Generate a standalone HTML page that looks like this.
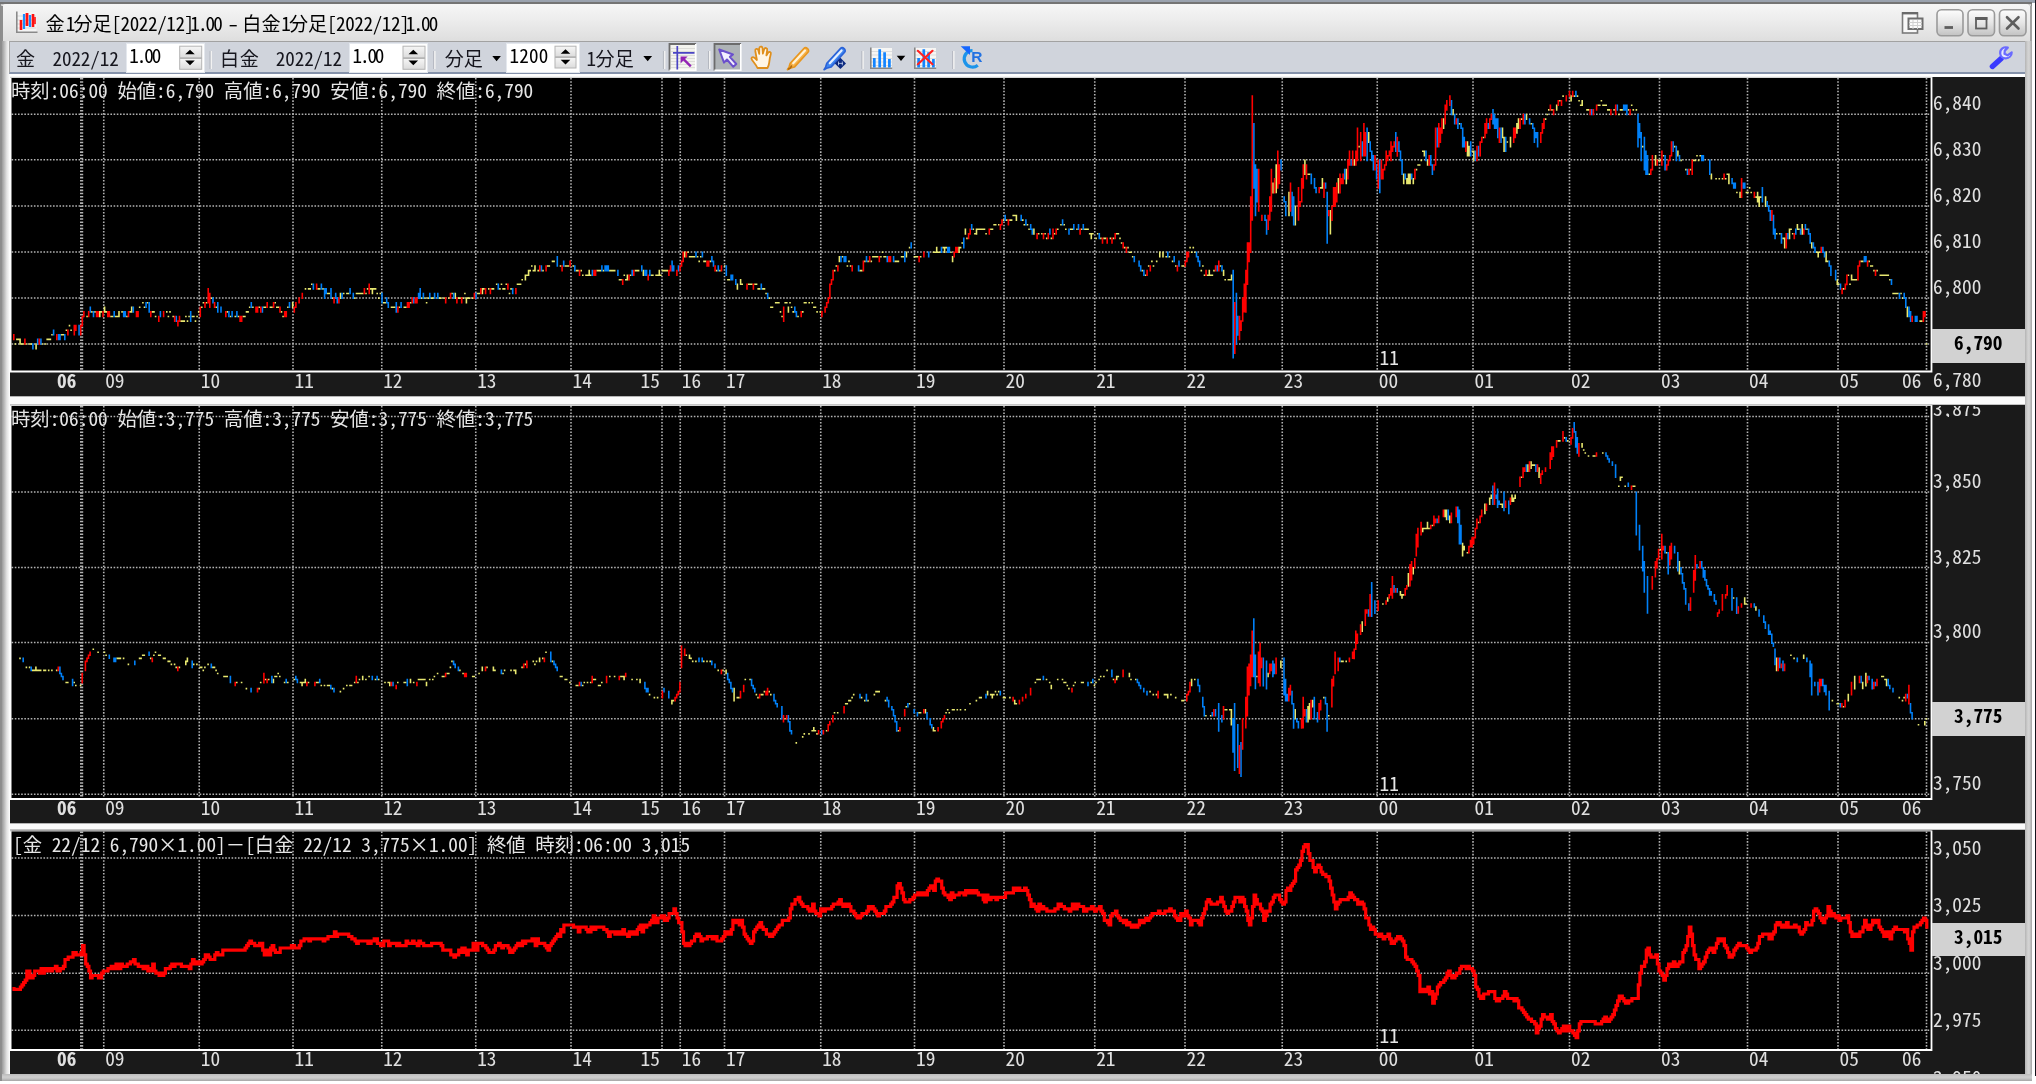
<!DOCTYPE html>
<html lang="ja"><head><meta charset="utf-8"><title>chart</title>
<style>
html,body{margin:0;padding:0}
body{width:2036px;height:1084px;position:relative;overflow:hidden;background:#fff;font-family:"Liberation Sans","IPAGothic",sans-serif}
.abs{position:absolute}
.gl{left:0;top:0;width:2036px;height:1084px;will-change:transform}
.mono{font-family:"Noto Sans CJK JP","IPAGothic","Liberation Mono",monospace;font-feature-settings:"hwid";font-size:19.35px;line-height:20px;white-space:pre;color:#e6e6e6}
.ui{font-family:"Noto Sans CJK JP","IPAGothic","Liberation Sans",sans-serif;font-feature-settings:"hwid";font-size:19.1px;line-height:22px;white-space:pre;color:#16161e}
.tt{top:12px;color:#000}
.spin{height:28.3px;background:#fff;box-shadow:0 0 0 1px #e4e8ee}
.yl{position:absolute;left:1933px;color:#e0e0e0}
.xl{position:absolute;color:#e0e0e0}
.box{position:absolute;left:1931.5px;width:93.5px;background:#d2d2d2;color:#000;font-weight:bold;text-align:center}
svg{position:absolute;left:0;top:0}
</style></head><body>

<div class="abs" style="left:0;top:0;width:2036px;height:3px;background:#9aa2ae"></div>
<div class="abs" style="left:2034.5px;top:0;width:2px;height:1076px;background:#14141c"></div>
<div class="abs" id="win" style="left:0;top:2.5px;width:2031.5px;height:1078px;background:#c8c8c8;box-shadow:inset 0 0 0 1px #8c8c8c"></div>
<div class="abs" style="left:1px;top:4px;width:2030px;height:37px;background:linear-gradient(#f6f6f6,#ececec 45%,#dedede);border-radius:5px 5px 0 0"></div>
<div class="abs" style="left:0;top:2.4px;width:2032px;height:1.8px;background:#747474"></div>
<div class="abs" style="left:2030px;top:6px;width:1.6px;height:1074px;background:#a2a2a2"></div>
<div class="abs" style="left:0.8px;top:6px;width:1.8px;height:1074px;background:#8e8e8e"></div>
<div class="abs" style="left:1.5px;top:41px;width:8px;height:1038px;background:linear-gradient(90deg,#9a9a9a,#bdbdbd 30%,#e2e2e2 60%,#f4f4f4 85%,#fff)"></div>
<div class="abs" style="left:2025px;top:41px;width:6.5px;height:1039px;background:linear-gradient(90deg,#b4b4b4,#d4d4d4 45%,#cfcfcf 65%,#a4a4a4)"></div>
<div class="abs" style="left:1.5px;top:1074px;width:2030px;height:6.5px;background:linear-gradient(#bcbcbc,#cfcfcf 45%,#c4c4c4 65%,#a6a6a6)"></div>
<div class="abs" id="tb" style="left:8.5px;top:40.5px;width:2016.5px;height:33px;background:#d0d4dc;border-top:1.5px solid #a2a2a2;border-left:1.5px solid #a8a8a8;box-sizing:border-box;border-bottom:2px solid #8592aa"></div>
<div class="abs" style="left:9.5px;top:73.5px;width:2015.5px;height:3.5px;background:#fff"></div>
<div class="abs" style="left:10px;top:77px;width:2015px;height:997px;background:#1a1a1a"></div>
<div class="abs" style="left:10.0px;top:77.0px;width:1921.5px;height:294.5px;background:#000"></div>
<div class="abs" style="left:10.0px;top:405.0px;width:1921.5px;height:394.0px;background:#000"></div>
<div class="abs" style="left:10.0px;top:830.5px;width:1921.5px;height:219.5px;background:#000"></div>
<div class="abs" style="left:9.5px;top:396.0px;width:2015.5px;height:8.5px;background:#fbfbfb;border-top:1.6px solid #b4b4b4;border-bottom:1.8px solid #c2c2c2;box-sizing:border-box"></div>
<div class="abs" style="left:9.5px;top:822.5px;width:2015.5px;height:7.5px;background:#fbfbfb;border-top:1.6px solid #b4b4b4;border-bottom:1.8px solid #c2c2c2;box-sizing:border-box"></div>
<div class="abs gl">
<div class="abs mono" style="left:11.0px;top:80.0px">時刻:06:00 始値:6,790 高値:6,790 安値:6,790 終値:6,790</div>
<div class="abs mono" style="left:11.0px;top:408.0px">時刻:06:00 始値:3,775 高値:3,775 安値:3,775 終値:3,775</div>
<div class="abs mono" style="left:13.0px;top:833.5px">[金 22/12 6,790×1.00]<span style="font-feature-settings:normal">－</span>[白金 22/12 3,775×1.00] 終値 時刻:06:00 3,015</div>
</div>
<svg width="2036" height="1084" viewBox="0 0 2036 1084">
<path d="M11.6 114.25H1930.5M11.6 159.75H1930.5M11.6 206.00H1930.5M11.6 252.00H1930.5M11.6 298.00H1930.5M11.6 344.00H1930.5" stroke="#b2b2b2" stroke-width="1.6" stroke-dasharray="1.594 1.594" fill="none"/>
<path d="M103.75 78.0V370.5M199.25 78.0V370.5M293.00 78.0V370.5M381.75 78.0V370.5M475.75 78.0V370.5M571.00 78.0V370.5M662.00 78.0V370.5M680.25 78.0V370.5M724.50 78.0V370.5M820.75 78.0V370.5M914.50 78.0V370.5M1004.00 78.0V370.5M1094.75 78.0V370.5M1185.00 78.0V370.5M1282.25 78.0V370.5M1377.25 78.0V370.5M1473.00 78.0V370.5M1569.50 78.0V370.5M1659.50 78.0V370.5M1747.50 78.0V370.5M1838.00 78.0V370.5M1926.50 78.0V370.5" stroke="#b2b2b2" stroke-width="1.6" stroke-dasharray="1.594 1.594" fill="none"/>
<path d="M81.60 78.0V370.5" stroke="#b2b2b2" stroke-width="3.2" stroke-dasharray="1.594 1.594" fill="none"/>
<path d="M10.6 77.0V371.5H1931.5V77.0" stroke="#fff" stroke-width="1.8" fill="none"/>
<path d="M10.0 77.4H1931.5" stroke="#d4d4d4" stroke-width="1.3" fill="none"/>
<path d="M11.6 416.50H1930.5M11.6 492.00H1930.5M11.6 567.50H1930.5M11.6 642.50H1930.5M11.6 718.75H1930.5M11.6 794.25H1930.5" stroke="#b2b2b2" stroke-width="1.6" stroke-dasharray="1.594 1.594" fill="none"/>
<path d="M103.75 406.0V798.0M199.25 406.0V798.0M293.00 406.0V798.0M381.75 406.0V798.0M475.75 406.0V798.0M571.00 406.0V798.0M662.00 406.0V798.0M680.25 406.0V798.0M724.50 406.0V798.0M820.75 406.0V798.0M914.50 406.0V798.0M1004.00 406.0V798.0M1094.75 406.0V798.0M1185.00 406.0V798.0M1282.25 406.0V798.0M1377.25 406.0V798.0M1473.00 406.0V798.0M1569.50 406.0V798.0M1659.50 406.0V798.0M1747.50 406.0V798.0M1838.00 406.0V798.0M1926.50 406.0V798.0" stroke="#b2b2b2" stroke-width="1.6" stroke-dasharray="1.594 1.594" fill="none"/>
<path d="M81.60 406.0V798.0" stroke="#b2b2b2" stroke-width="3.2" stroke-dasharray="1.594 1.594" fill="none"/>
<path d="M10.6 405.0V799.0H1931.5V405.0" stroke="#fff" stroke-width="1.8" fill="none"/>
<path d="M10.0 405.4H1931.5" stroke="#d4d4d4" stroke-width="1.3" fill="none"/>
<path d="M11.6 858.00H1930.5M11.6 915.50H1930.5M11.6 973.25H1930.5M11.6 1030.25H1930.5" stroke="#b2b2b2" stroke-width="1.6" stroke-dasharray="1.594 1.594" fill="none"/>
<path d="M103.75 831.5V1049.0M199.25 831.5V1049.0M293.00 831.5V1049.0M381.75 831.5V1049.0M475.75 831.5V1049.0M571.00 831.5V1049.0M662.00 831.5V1049.0M680.25 831.5V1049.0M724.50 831.5V1049.0M820.75 831.5V1049.0M914.50 831.5V1049.0M1004.00 831.5V1049.0M1094.75 831.5V1049.0M1185.00 831.5V1049.0M1282.25 831.5V1049.0M1377.25 831.5V1049.0M1473.00 831.5V1049.0M1569.50 831.5V1049.0M1659.50 831.5V1049.0M1747.50 831.5V1049.0M1838.00 831.5V1049.0M1926.50 831.5V1049.0" stroke="#b2b2b2" stroke-width="1.6" stroke-dasharray="1.594 1.594" fill="none"/>
<path d="M81.60 831.5V1049.0" stroke="#b2b2b2" stroke-width="3.2" stroke-dasharray="1.594 1.594" fill="none"/>
<path d="M10.6 830.5V1050.0H1931.5V830.5" stroke="#fff" stroke-width="1.8" fill="none"/>
<path d="M10.0 830.9H1931.5" stroke="#d4d4d4" stroke-width="1.3" fill="none"/>
<path d="M14.5 343.2h1.59v1.6h-1.59zM16.1 338.6h1.59v1.6h-1.59zM17.7 338.6h1.59v1.6h-1.59zM19.3 338.6h1.59v6.2h-1.59zM20.9 343.2h1.59v1.6h-1.59zM22.5 343.2h1.59v1.6h-1.59zM25.7 343.2h1.59v1.6h-1.59zM28.9 343.2h1.59v1.6h-1.59zM30.5 343.2h1.59v1.6h-1.59zM35.3 343.2h1.59v6.2h-1.59zM41.6 343.2h1.59v1.6h-1.59zM44.8 343.2h1.59v1.6h-1.59zM46.4 338.6h1.59v1.6h-1.59zM48.0 338.6h1.59v1.6h-1.59zM49.6 338.6h1.59v1.6h-1.59zM51.2 334.0h1.59v1.6h-1.59zM60.8 334.0h1.59v1.6h-1.59zM62.4 334.0h1.59v1.6h-1.59zM65.6 329.4h1.59v1.6h-1.59zM68.7 324.8h1.59v1.6h-1.59zM70.3 329.4h1.59v1.6h-1.59zM86.3 315.7h1.59v1.6h-1.59zM91.1 311.1h1.59v1.6h-1.59zM94.2 311.1h1.59v1.6h-1.59zM99.0 311.1h1.59v6.2h-1.59zM100.6 311.1h1.59v1.6h-1.59zM103.8 306.5h1.59v6.2h-1.59zM105.4 311.1h1.59v1.6h-1.59zM110.2 315.7h1.59v1.6h-1.59zM111.8 315.7h1.59v1.6h-1.59zM115.0 315.7h1.59v1.6h-1.59zM116.6 315.7h1.59v1.6h-1.59zM118.2 311.1h1.59v6.2h-1.59zM121.3 311.1h1.59v1.6h-1.59zM126.1 315.7h1.59v1.6h-1.59zM129.3 311.1h1.59v1.6h-1.59zM130.9 306.5h1.59v6.2h-1.59zM138.9 306.5h1.59v1.6h-1.59zM142.1 301.9h1.59v1.6h-1.59zM143.7 306.5h1.59v1.6h-1.59zM146.8 301.9h1.59v1.6h-1.59zM151.6 311.1h1.59v1.6h-1.59zM153.2 311.1h1.59v1.6h-1.59zM154.8 315.7h1.59v1.6h-1.59zM166.0 311.1h1.59v1.6h-1.59zM167.6 315.7h1.59v1.6h-1.59zM169.2 311.1h1.59v1.6h-1.59zM172.4 315.7h1.59v1.6h-1.59zM180.3 320.3h1.59v1.6h-1.59zM181.9 320.3h1.59v1.6h-1.59zM183.5 320.3h1.59v1.6h-1.59zM185.1 315.7h1.59v1.6h-1.59zM186.7 320.3h1.59v1.6h-1.59zM188.3 315.7h1.59v1.6h-1.59zM191.5 315.7h1.59v1.6h-1.59zM193.1 315.7h1.59v1.6h-1.59zM194.7 320.3h1.59v1.6h-1.59zM196.3 315.7h1.59v1.6h-1.59zM197.9 311.1h1.59v1.6h-1.59zM201.0 306.5h1.59v1.6h-1.59zM202.6 301.9h1.59v1.6h-1.59zM205.8 301.9h1.59v1.6h-1.59zM210.6 297.3h1.59v1.6h-1.59zM215.4 306.5h1.59v1.6h-1.59zM226.5 311.1h1.59v1.6h-1.59zM229.7 315.7h1.59v1.6h-1.59zM234.5 315.7h1.59v1.6h-1.59zM237.7 315.7h1.59v1.6h-1.59zM242.5 315.7h1.59v1.6h-1.59zM244.1 315.7h1.59v1.6h-1.59zM245.7 311.1h1.59v1.6h-1.59zM247.3 311.1h1.59v1.6h-1.59zM248.9 306.5h1.59v1.6h-1.59zM252.1 306.5h1.59v1.6h-1.59zM258.4 306.5h1.59v1.6h-1.59zM263.2 306.5h1.59v1.6h-1.59zM264.8 306.5h1.59v1.6h-1.59zM269.6 306.5h1.59v1.6h-1.59zM271.2 306.5h1.59v1.6h-1.59zM274.4 301.9h1.59v1.6h-1.59zM276.0 306.5h1.59v1.6h-1.59zM277.6 306.5h1.59v1.6h-1.59zM280.7 311.1h1.59v1.6h-1.59zM282.3 315.7h1.59v1.6h-1.59zM287.1 306.5h1.59v1.6h-1.59zM291.9 301.9h1.59v6.2h-1.59zM304.7 288.1h1.59v1.6h-1.59zM307.8 288.1h1.59v1.6h-1.59zM309.4 288.1h1.59v1.6h-1.59zM311.0 283.5h1.59v1.6h-1.59zM317.4 288.1h1.59v1.6h-1.59zM319.0 288.1h1.59v1.6h-1.59zM322.2 288.1h1.59v1.6h-1.59zM327.0 292.7h1.59v1.6h-1.59zM328.6 292.7h1.59v1.6h-1.59zM331.8 297.3h1.59v1.6h-1.59zM339.7 292.7h1.59v6.2h-1.59zM342.9 292.7h1.59v1.6h-1.59zM346.1 292.7h1.59v1.6h-1.59zM347.7 292.7h1.59v1.6h-1.59zM354.1 297.3h1.59v1.6h-1.59zM355.7 292.7h1.59v1.6h-1.59zM357.3 292.7h1.59v1.6h-1.59zM358.9 292.7h1.59v1.6h-1.59zM360.4 292.7h1.59v1.6h-1.59zM362.0 292.7h1.59v1.6h-1.59zM365.2 292.7h1.59v1.6h-1.59zM366.8 288.1h1.59v1.6h-1.59zM370.0 288.1h1.59v1.6h-1.59zM371.6 288.1h1.59v6.2h-1.59zM373.2 288.1h1.59v1.6h-1.59zM374.8 288.1h1.59v1.6h-1.59zM376.4 292.7h1.59v1.6h-1.59zM378.0 297.3h1.59v1.6h-1.59zM379.6 292.7h1.59v1.6h-1.59zM382.8 301.9h1.59v1.6h-1.59zM384.4 301.9h1.59v1.6h-1.59zM390.7 306.5h1.59v1.6h-1.59zM392.3 306.5h1.59v1.6h-1.59zM393.9 306.5h1.59v1.6h-1.59zM398.7 306.5h1.59v1.6h-1.59zM403.5 306.5h1.59v1.6h-1.59zM405.1 306.5h1.59v1.6h-1.59zM409.9 301.9h1.59v1.6h-1.59zM421.0 297.3h1.59v1.6h-1.59zM424.2 297.3h1.59v1.6h-1.59zM425.8 301.9h1.59v1.6h-1.59zM427.4 297.3h1.59v1.6h-1.59zM430.6 297.3h1.59v1.6h-1.59zM432.2 297.3h1.59v1.6h-1.59zM438.6 297.3h1.59v1.6h-1.59zM440.1 297.3h1.59v1.6h-1.59zM443.3 297.3h1.59v1.6h-1.59zM448.1 297.3h1.59v1.6h-1.59zM451.3 292.7h1.59v1.6h-1.59zM454.5 292.7h1.59v6.2h-1.59zM457.7 297.3h1.59v1.6h-1.59zM459.3 297.3h1.59v1.6h-1.59zM462.5 297.3h1.59v1.6h-1.59zM464.1 292.7h1.59v1.6h-1.59zM465.6 297.3h1.59v6.2h-1.59zM467.2 297.3h1.59v1.6h-1.59zM468.8 297.3h1.59v1.6h-1.59zM472.0 297.3h1.59v1.6h-1.59zM476.8 292.7h1.59v1.6h-1.59zM478.4 292.7h1.59v1.6h-1.59zM481.6 288.1h1.59v6.2h-1.59zM483.2 288.1h1.59v1.6h-1.59zM488.0 288.1h1.59v1.6h-1.59zM491.2 288.1h1.59v1.6h-1.59zM492.7 288.1h1.59v1.6h-1.59zM495.9 283.5h1.59v1.6h-1.59zM499.1 288.1h1.59v1.6h-1.59zM500.7 283.5h1.59v1.6h-1.59zM502.3 288.1h1.59v1.6h-1.59zM503.9 288.1h1.59v1.6h-1.59zM505.5 283.5h1.59v1.6h-1.59zM508.7 292.7h1.59v1.6h-1.59zM510.3 288.1h1.59v1.6h-1.59zM516.7 283.5h1.59v1.6h-1.59zM518.3 283.5h1.59v1.6h-1.59zM519.8 283.5h1.59v1.6h-1.59zM521.4 278.9h1.59v1.6h-1.59zM524.6 274.4h1.59v6.2h-1.59zM526.2 274.4h1.59v1.6h-1.59zM527.8 269.8h1.59v6.2h-1.59zM529.4 269.8h1.59v1.6h-1.59zM531.0 265.2h1.59v1.6h-1.59zM532.6 269.8h1.59v1.6h-1.59zM534.2 265.2h1.59v6.2h-1.59zM537.4 269.8h1.59v1.6h-1.59zM542.2 269.8h1.59v1.6h-1.59zM546.9 265.2h1.59v1.6h-1.59zM548.5 265.2h1.59v1.6h-1.59zM551.7 260.6h1.59v1.6h-1.59zM553.3 260.6h1.59v1.6h-1.59zM559.7 265.2h1.59v1.6h-1.59zM564.5 265.2h1.59v1.6h-1.59zM566.1 265.2h1.59v1.6h-1.59zM567.7 265.2h1.59v1.6h-1.59zM572.4 265.2h1.59v1.6h-1.59zM575.6 269.8h1.59v1.6h-1.59zM577.2 269.8h1.59v1.6h-1.59zM580.4 269.8h1.59v1.6h-1.59zM582.0 274.4h1.59v1.6h-1.59zM585.2 274.4h1.59v1.6h-1.59zM586.8 274.4h1.59v1.6h-1.59zM588.4 269.8h1.59v6.2h-1.59zM590.0 274.4h1.59v1.6h-1.59zM596.4 269.8h1.59v1.6h-1.59zM598.0 269.8h1.59v1.6h-1.59zM599.5 269.8h1.59v1.6h-1.59zM602.7 269.8h1.59v1.6h-1.59zM609.1 269.8h1.59v1.6h-1.59zM610.7 269.8h1.59v1.6h-1.59zM612.3 269.8h1.59v1.6h-1.59zM613.9 269.8h1.59v1.6h-1.59zM618.7 278.9h1.59v1.6h-1.59zM620.3 278.9h1.59v1.6h-1.59zM623.5 274.4h1.59v1.6h-1.59zM625.0 278.9h1.59v1.6h-1.59zM626.6 274.4h1.59v6.2h-1.59zM629.8 274.4h1.59v1.6h-1.59zM634.6 269.8h1.59v1.6h-1.59zM636.2 269.8h1.59v1.6h-1.59zM637.8 269.8h1.59v1.6h-1.59zM642.6 269.8h1.59v6.2h-1.59zM650.6 274.4h1.59v1.6h-1.59zM652.1 274.4h1.59v1.6h-1.59zM655.3 274.4h1.59v1.6h-1.59zM656.9 274.4h1.59v1.6h-1.59zM658.5 269.8h1.59v6.2h-1.59zM660.1 274.4h1.59v1.6h-1.59zM661.7 269.8h1.59v1.6h-1.59zM663.3 269.8h1.59v1.6h-1.59zM664.9 269.8h1.59v1.6h-1.59zM666.5 269.8h1.59v1.6h-1.59zM684.0 251.4h1.59v6.2h-1.59zM687.2 251.4h1.59v1.6h-1.59zM688.8 256.0h1.59v1.6h-1.59zM690.4 256.0h1.59v1.6h-1.59zM692.0 256.0h1.59v1.6h-1.59zM693.6 256.0h1.59v1.6h-1.59zM696.8 256.0h1.59v1.6h-1.59zM698.4 260.6h1.59v1.6h-1.59zM700.0 256.0h1.59v1.6h-1.59zM703.2 260.6h1.59v1.6h-1.59zM704.7 260.6h1.59v1.6h-1.59zM709.5 260.6h1.59v1.6h-1.59zM715.9 269.8h1.59v1.6h-1.59zM719.1 269.8h1.59v1.6h-1.59zM723.9 265.2h1.59v1.6h-1.59zM727.1 278.9h1.59v1.6h-1.59zM728.7 278.9h1.59v1.6h-1.59zM736.6 283.5h1.59v6.2h-1.59zM739.8 278.9h1.59v6.2h-1.59zM741.4 283.5h1.59v1.6h-1.59zM747.8 283.5h1.59v1.6h-1.59zM749.4 283.5h1.59v1.6h-1.59zM751.0 283.5h1.59v1.6h-1.59zM754.2 283.5h1.59v1.6h-1.59zM755.8 283.5h1.59v1.6h-1.59zM757.4 288.1h1.59v1.6h-1.59zM758.9 288.1h1.59v1.6h-1.59zM762.1 288.1h1.59v1.6h-1.59zM763.7 288.1h1.59v1.6h-1.59zM765.3 292.7h1.59v1.6h-1.59zM768.5 297.3h1.59v1.6h-1.59zM770.1 306.5h1.59v1.6h-1.59zM771.7 306.5h1.59v1.6h-1.59zM774.9 301.9h1.59v1.6h-1.59zM776.5 301.9h1.59v1.6h-1.59zM778.1 301.9h1.59v1.6h-1.59zM779.7 311.1h1.59v1.6h-1.59zM781.3 315.7h1.59v1.6h-1.59zM784.4 301.9h1.59v1.6h-1.59zM786.0 301.9h1.59v1.6h-1.59zM787.6 306.5h1.59v6.2h-1.59zM789.2 301.9h1.59v1.6h-1.59zM790.8 306.5h1.59v1.6h-1.59zM792.4 311.1h1.59v1.6h-1.59zM797.2 315.7h1.59v1.6h-1.59zM802.0 311.1h1.59v1.6h-1.59zM803.6 301.9h1.59v1.6h-1.59zM805.2 301.9h1.59v1.6h-1.59zM808.4 301.9h1.59v1.6h-1.59zM811.5 301.9h1.59v1.6h-1.59zM813.1 306.5h1.59v1.6h-1.59zM814.7 306.5h1.59v1.6h-1.59zM816.3 311.1h1.59v1.6h-1.59zM819.5 311.1h1.59v1.6h-1.59zM833.9 269.8h1.59v1.6h-1.59zM835.5 265.2h1.59v1.6h-1.59zM838.6 256.0h1.59v6.2h-1.59zM841.8 256.0h1.59v1.6h-1.59zM846.6 265.2h1.59v1.6h-1.59zM848.2 260.6h1.59v1.6h-1.59zM849.8 265.2h1.59v1.6h-1.59zM859.4 269.8h1.59v1.6h-1.59zM861.0 269.8h1.59v1.6h-1.59zM864.1 260.6h1.59v1.6h-1.59zM867.3 260.6h1.59v1.6h-1.59zM870.5 260.6h1.59v1.6h-1.59zM872.1 256.0h1.59v1.6h-1.59zM873.7 256.0h1.59v1.6h-1.59zM875.3 256.0h1.59v1.6h-1.59zM876.9 256.0h1.59v1.6h-1.59zM880.1 256.0h1.59v1.6h-1.59zM881.7 251.4h1.59v1.6h-1.59zM883.3 256.0h1.59v1.6h-1.59zM884.9 256.0h1.59v1.6h-1.59zM894.4 260.6h1.59v1.6h-1.59zM896.0 260.6h1.59v1.6h-1.59zM897.6 260.6h1.59v1.6h-1.59zM900.8 256.0h1.59v1.6h-1.59zM902.4 256.0h1.59v1.6h-1.59zM905.6 251.4h1.59v6.2h-1.59zM908.8 246.8h1.59v1.6h-1.59zM913.6 256.0h1.59v1.6h-1.59zM915.2 256.0h1.59v1.6h-1.59zM916.8 256.0h1.59v1.6h-1.59zM919.9 256.0h1.59v1.6h-1.59zM932.7 251.4h1.59v1.6h-1.59zM934.3 251.4h1.59v1.6h-1.59zM935.9 246.8h1.59v6.2h-1.59zM937.5 251.4h1.59v1.6h-1.59zM939.1 251.4h1.59v1.6h-1.59zM942.3 246.8h1.59v1.6h-1.59zM943.8 246.8h1.59v6.2h-1.59zM945.4 246.8h1.59v1.6h-1.59zM950.2 251.4h1.59v1.6h-1.59zM951.8 256.0h1.59v6.2h-1.59zM958.2 246.8h1.59v6.2h-1.59zM959.8 246.8h1.59v1.6h-1.59zM961.4 242.2h1.59v1.6h-1.59zM964.6 228.5h1.59v6.2h-1.59zM966.2 237.6h1.59v1.6h-1.59zM972.5 228.5h1.59v1.6h-1.59zM974.1 233.0h1.59v1.6h-1.59zM975.7 228.5h1.59v6.2h-1.59zM977.3 228.5h1.59v1.6h-1.59zM978.9 228.5h1.59v1.6h-1.59zM980.5 228.5h1.59v1.6h-1.59zM982.1 228.5h1.59v1.6h-1.59zM983.7 228.5h1.59v1.6h-1.59zM985.3 233.0h1.59v1.6h-1.59zM990.1 228.5h1.59v1.6h-1.59zM991.7 228.5h1.59v1.6h-1.59zM993.3 223.9h1.59v1.6h-1.59zM994.9 223.9h1.59v1.6h-1.59zM998.0 223.9h1.59v1.6h-1.59zM1002.8 219.3h1.59v1.6h-1.59zM1006.0 219.3h1.59v1.6h-1.59zM1009.2 219.3h1.59v1.6h-1.59zM1010.8 219.3h1.59v1.6h-1.59zM1012.4 214.7h1.59v1.6h-1.59zM1014.0 214.7h1.59v1.6h-1.59zM1015.6 214.7h1.59v6.2h-1.59zM1022.0 219.3h1.59v1.6h-1.59zM1023.5 223.9h1.59v1.6h-1.59zM1026.7 223.9h1.59v1.6h-1.59zM1028.3 228.5h1.59v1.6h-1.59zM1033.1 228.5h1.59v6.2h-1.59zM1037.9 233.0h1.59v1.6h-1.59zM1041.1 233.0h1.59v1.6h-1.59zM1044.3 233.0h1.59v1.6h-1.59zM1045.9 237.6h1.59v1.6h-1.59zM1050.6 237.6h1.59v1.6h-1.59zM1053.8 233.0h1.59v1.6h-1.59zM1057.0 228.5h1.59v1.6h-1.59zM1060.2 223.9h1.59v1.6h-1.59zM1063.4 223.9h1.59v1.6h-1.59zM1065.0 228.5h1.59v1.6h-1.59zM1069.8 228.5h1.59v1.6h-1.59zM1071.4 228.5h1.59v1.6h-1.59zM1076.2 228.5h1.59v1.6h-1.59zM1080.9 228.5h1.59v1.6h-1.59zM1084.1 228.5h1.59v1.6h-1.59zM1085.7 228.5h1.59v1.6h-1.59zM1087.3 228.5h1.59v1.6h-1.59zM1088.9 233.0h1.59v1.6h-1.59zM1090.5 233.0h1.59v6.2h-1.59zM1092.1 233.0h1.59v1.6h-1.59zM1095.3 237.6h1.59v1.6h-1.59zM1096.9 233.0h1.59v1.6h-1.59zM1100.1 237.6h1.59v1.6h-1.59zM1103.2 237.6h1.59v1.6h-1.59zM1104.8 237.6h1.59v1.6h-1.59zM1109.6 237.6h1.59v1.6h-1.59zM1112.8 237.6h1.59v1.6h-1.59zM1116.0 233.0h1.59v1.6h-1.59zM1117.6 233.0h1.59v1.6h-1.59zM1119.2 237.6h1.59v1.6h-1.59zM1120.8 242.2h1.59v1.6h-1.59zM1124.0 246.8h1.59v1.6h-1.59zM1127.2 246.8h1.59v1.6h-1.59zM1128.8 251.4h1.59v1.6h-1.59zM1130.3 251.4h1.59v1.6h-1.59zM1131.9 256.0h1.59v1.6h-1.59zM1141.5 269.8h1.59v1.6h-1.59zM1144.7 274.4h1.59v1.6h-1.59zM1147.9 265.2h1.59v1.6h-1.59zM1151.1 260.6h1.59v1.6h-1.59zM1152.7 265.2h1.59v1.6h-1.59zM1155.9 260.6h1.59v1.6h-1.59zM1159.0 251.4h1.59v6.2h-1.59zM1162.2 251.4h1.59v6.2h-1.59zM1165.4 256.0h1.59v1.6h-1.59zM1168.6 256.0h1.59v1.6h-1.59zM1171.8 260.6h1.59v1.6h-1.59zM1175.0 265.2h1.59v1.6h-1.59zM1181.4 265.2h1.59v1.6h-1.59zM1182.9 265.2h1.59v1.6h-1.59zM1189.3 246.8h1.59v1.6h-1.59zM1190.9 251.4h1.59v1.6h-1.59zM1192.5 246.8h1.59v1.6h-1.59zM1194.1 251.4h1.59v1.6h-1.59zM1200.5 269.8h1.59v1.6h-1.59zM1202.1 265.2h1.59v1.6h-1.59zM1203.7 274.4h1.59v1.6h-1.59zM1206.9 274.4h1.59v1.6h-1.59zM1208.5 269.8h1.59v6.2h-1.59zM1210.0 274.4h1.59v1.6h-1.59zM1211.6 274.4h1.59v1.6h-1.59zM1213.2 269.8h1.59v1.6h-1.59zM1219.6 265.2h1.59v1.6h-1.59zM1222.8 269.8h1.59v6.2h-1.59zM1224.4 278.9h1.59v1.6h-1.59zM1227.6 278.9h1.59v1.6h-1.59zM1229.2 278.9h1.59v1.6h-1.59zM1230.8 274.4h1.59v6.2h-1.59zM1272.2 182.6h1.59v10.8h-1.59zM1275.4 164.2h1.59v29.1h-1.59zM1288.2 191.7h1.59v24.5h-1.59zM1294.5 205.5h1.59v20.0h-1.59zM1304.1 159.6h1.59v15.4h-1.59zM1307.3 173.4h1.59v1.6h-1.59zM1308.9 173.4h1.59v1.6h-1.59zM1320.0 187.1h1.59v1.6h-1.59zM1321.6 178.0h1.59v10.8h-1.59zM1329.6 210.1h1.59v24.5h-1.59zM1337.6 178.0h1.59v15.4h-1.59zM1345.5 168.8h1.59v15.4h-1.59zM1353.5 159.6h1.59v6.2h-1.59zM1358.3 145.8h1.59v1.6h-1.59zM1367.9 132.1h1.59v10.8h-1.59zM1402.9 173.4h1.59v10.8h-1.59zM1406.1 178.0h1.59v6.2h-1.59zM1407.7 173.4h1.59v10.8h-1.59zM1409.3 173.4h1.59v10.8h-1.59zM1412.5 178.0h1.59v6.2h-1.59zM1415.7 168.8h1.59v1.6h-1.59zM1417.3 164.2h1.59v1.6h-1.59zM1418.9 164.2h1.59v1.6h-1.59zM1420.5 159.6h1.59v1.6h-1.59zM1422.0 150.4h1.59v1.6h-1.59zM1423.6 150.4h1.59v6.2h-1.59zM1426.8 159.6h1.59v6.2h-1.59zM1442.8 118.3h1.59v10.8h-1.59zM1452.3 109.1h1.59v6.2h-1.59zM1458.7 122.9h1.59v1.6h-1.59zM1466.7 141.2h1.59v15.4h-1.59zM1468.3 145.8h1.59v10.8h-1.59zM1471.5 150.4h1.59v1.6h-1.59zM1473.1 150.4h1.59v10.8h-1.59zM1482.6 136.7h1.59v1.6h-1.59zM1501.7 127.5h1.59v10.8h-1.59zM1503.3 136.7h1.59v15.4h-1.59zM1506.5 141.2h1.59v1.6h-1.59zM1509.7 136.7h1.59v10.8h-1.59zM1516.1 122.9h1.59v10.8h-1.59zM1517.7 118.3h1.59v10.8h-1.59zM1520.9 118.3h1.59v1.6h-1.59zM1525.7 113.7h1.59v6.2h-1.59zM1530.4 122.9h1.59v1.6h-1.59zM1544.8 118.3h1.59v1.6h-1.59zM1546.4 113.7h1.59v1.6h-1.59zM1548.0 109.1h1.59v1.6h-1.59zM1551.2 109.1h1.59v1.6h-1.59zM1555.9 104.5h1.59v6.2h-1.59zM1559.1 99.9h1.59v1.6h-1.59zM1562.3 95.3h1.59v1.6h-1.59zM1570.3 95.3h1.59v6.2h-1.59zM1573.5 95.3h1.59v1.6h-1.59zM1576.7 95.3h1.59v1.6h-1.59zM1578.3 99.9h1.59v1.6h-1.59zM1579.9 104.5h1.59v1.6h-1.59zM1581.4 99.9h1.59v6.2h-1.59zM1586.2 109.1h1.59v1.6h-1.59zM1587.8 109.1h1.59v1.6h-1.59zM1597.4 104.5h1.59v1.6h-1.59zM1599.0 104.5h1.59v1.6h-1.59zM1600.6 99.9h1.59v1.6h-1.59zM1602.2 104.5h1.59v1.6h-1.59zM1603.8 104.5h1.59v1.6h-1.59zM1605.4 104.5h1.59v1.6h-1.59zM1607.0 109.1h1.59v1.6h-1.59zM1608.5 109.1h1.59v1.6h-1.59zM1613.3 109.1h1.59v1.6h-1.59zM1618.1 113.7h1.59v1.6h-1.59zM1619.7 109.1h1.59v1.6h-1.59zM1621.3 109.1h1.59v1.6h-1.59zM1627.7 109.1h1.59v1.6h-1.59zM1630.9 104.5h1.59v1.6h-1.59zM1632.5 109.1h1.59v1.6h-1.59zM1635.6 109.1h1.59v1.6h-1.59zM1642.0 145.8h1.59v1.6h-1.59zM1648.4 173.4h1.59v1.6h-1.59zM1654.8 155.0h1.59v10.8h-1.59zM1658.0 159.6h1.59v1.6h-1.59zM1659.6 159.6h1.59v1.6h-1.59zM1662.7 155.0h1.59v1.6h-1.59zM1673.9 145.8h1.59v1.6h-1.59zM1677.1 150.4h1.59v6.2h-1.59zM1680.3 159.6h1.59v1.6h-1.59zM1685.1 168.8h1.59v1.6h-1.59zM1689.8 168.8h1.59v1.6h-1.59zM1693.0 159.6h1.59v1.6h-1.59zM1694.6 159.6h1.59v1.6h-1.59zM1696.2 155.0h1.59v1.6h-1.59zM1697.8 159.6h1.59v1.6h-1.59zM1699.4 155.0h1.59v1.6h-1.59zM1710.6 173.4h1.59v6.2h-1.59zM1715.3 178.0h1.59v1.6h-1.59zM1718.5 178.0h1.59v1.6h-1.59zM1721.7 178.0h1.59v1.6h-1.59zM1724.9 178.0h1.59v1.6h-1.59zM1726.5 173.4h1.59v1.6h-1.59zM1728.1 173.4h1.59v10.8h-1.59zM1736.1 191.7h1.59v1.6h-1.59zM1739.3 191.7h1.59v6.2h-1.59zM1745.6 191.7h1.59v1.6h-1.59zM1747.2 191.7h1.59v1.6h-1.59zM1748.8 187.1h1.59v1.6h-1.59zM1750.4 191.7h1.59v1.6h-1.59zM1755.2 196.3h1.59v1.6h-1.59zM1756.8 191.7h1.59v10.8h-1.59zM1758.4 196.3h1.59v10.8h-1.59zM1760.0 196.3h1.59v1.6h-1.59zM1764.8 196.3h1.59v10.8h-1.59zM1775.9 233.0h1.59v1.6h-1.59zM1779.1 233.0h1.59v1.6h-1.59zM1782.3 237.6h1.59v1.6h-1.59zM1783.9 237.6h1.59v10.8h-1.59zM1788.7 228.5h1.59v10.8h-1.59zM1790.3 228.5h1.59v1.6h-1.59zM1791.9 233.0h1.59v1.6h-1.59zM1796.6 223.9h1.59v6.2h-1.59zM1798.2 228.5h1.59v1.6h-1.59zM1801.4 223.9h1.59v10.8h-1.59zM1806.2 228.5h1.59v1.6h-1.59zM1811.0 242.2h1.59v6.2h-1.59zM1815.8 251.4h1.59v1.6h-1.59zM1817.4 251.4h1.59v6.2h-1.59zM1819.0 251.4h1.59v1.6h-1.59zM1825.3 251.4h1.59v10.8h-1.59zM1826.9 260.6h1.59v1.6h-1.59zM1836.5 278.9h1.59v6.2h-1.59zM1838.1 283.5h1.59v1.6h-1.59zM1842.9 288.1h1.59v1.6h-1.59zM1847.6 274.4h1.59v1.6h-1.59zM1849.2 283.5h1.59v1.6h-1.59zM1850.8 274.4h1.59v6.2h-1.59zM1852.4 278.9h1.59v1.6h-1.59zM1854.0 278.9h1.59v1.6h-1.59zM1855.6 278.9h1.59v1.6h-1.59zM1860.4 260.6h1.59v1.6h-1.59zM1862.0 260.6h1.59v1.6h-1.59zM1868.4 260.6h1.59v1.6h-1.59zM1870.0 265.2h1.59v1.6h-1.59zM1871.6 265.2h1.59v1.6h-1.59zM1873.2 269.8h1.59v1.6h-1.59zM1876.3 269.8h1.59v1.6h-1.59zM1879.5 274.4h1.59v1.6h-1.59zM1881.1 274.4h1.59v1.6h-1.59zM1882.7 274.4h1.59v1.6h-1.59zM1884.3 274.4h1.59v1.6h-1.59zM1885.9 274.4h1.59v1.6h-1.59zM1887.5 274.4h1.59v1.6h-1.59zM1889.1 278.9h1.59v1.6h-1.59zM1892.3 292.7h1.59v1.6h-1.59zM1893.9 292.7h1.59v1.6h-1.59zM1895.5 292.7h1.59v1.6h-1.59zM1897.1 292.7h1.59v1.6h-1.59zM1900.2 292.7h1.59v1.6h-1.59zM1901.8 297.3h1.59v1.6h-1.59zM1906.6 306.5h1.59v10.8h-1.59zM1919.4 320.3h1.59v1.6h-1.59zM1921.0 320.3h1.59v1.6h-1.59zM1925.8 343.2h1.59v1.6h-1.59z" fill="#e8e870"/>
<path d="M32.1 343.2h1.59v6.2h-1.59zM36.9 338.6h1.59v6.2h-1.59zM40.1 338.6h1.59v6.2h-1.59zM52.8 329.4h1.59v6.2h-1.59zM57.6 334.0h1.59v6.2h-1.59zM59.2 334.0h1.59v6.2h-1.59zM64.0 334.0h1.59v6.2h-1.59zM78.3 324.8h1.59v10.8h-1.59zM89.5 306.5h1.59v6.2h-1.59zM92.7 311.1h1.59v6.2h-1.59zM113.4 311.1h1.59v6.2h-1.59zM122.9 311.1h1.59v6.2h-1.59zM124.5 311.1h1.59v6.2h-1.59zM132.5 306.5h1.59v6.2h-1.59zM145.3 301.9h1.59v6.2h-1.59zM148.4 301.9h1.59v10.8h-1.59zM159.6 311.1h1.59v6.2h-1.59zM175.5 315.7h1.59v6.2h-1.59zM189.9 311.1h1.59v10.8h-1.59zM212.2 297.3h1.59v6.2h-1.59zM217.0 301.9h1.59v10.8h-1.59zM220.2 306.5h1.59v6.2h-1.59zM228.1 311.1h1.59v6.2h-1.59zM231.3 311.1h1.59v6.2h-1.59zM236.1 311.1h1.59v6.2h-1.59zM250.5 301.9h1.59v6.2h-1.59zM261.6 306.5h1.59v6.2h-1.59zM288.7 301.9h1.59v6.2h-1.59zM312.6 283.5h1.59v6.2h-1.59zM320.6 283.5h1.59v6.2h-1.59zM323.8 288.1h1.59v10.8h-1.59zM325.4 288.1h1.59v6.2h-1.59zM330.2 288.1h1.59v10.8h-1.59zM334.9 292.7h1.59v6.2h-1.59zM336.5 297.3h1.59v6.2h-1.59zM341.3 292.7h1.59v6.2h-1.59zM349.3 288.1h1.59v6.2h-1.59zM352.5 292.7h1.59v6.2h-1.59zM381.2 292.7h1.59v10.8h-1.59zM385.9 297.3h1.59v6.2h-1.59zM387.5 301.9h1.59v6.2h-1.59zM395.5 301.9h1.59v10.8h-1.59zM400.3 301.9h1.59v6.2h-1.59zM413.0 297.3h1.59v6.2h-1.59zM417.8 292.7h1.59v6.2h-1.59zM419.4 288.1h1.59v10.8h-1.59zM422.6 292.7h1.59v6.2h-1.59zM429.0 292.7h1.59v6.2h-1.59zM433.8 292.7h1.59v6.2h-1.59zM437.0 292.7h1.59v6.2h-1.59zM452.9 292.7h1.59v6.2h-1.59zM475.2 292.7h1.59v6.2h-1.59zM497.5 283.5h1.59v6.2h-1.59zM511.9 288.1h1.59v6.2h-1.59zM540.6 265.2h1.59v6.2h-1.59zM556.5 256.0h1.59v10.8h-1.59zM562.9 260.6h1.59v6.2h-1.59zM574.0 265.2h1.59v6.2h-1.59zM591.6 269.8h1.59v6.2h-1.59zM601.1 265.2h1.59v6.2h-1.59zM604.3 265.2h1.59v6.2h-1.59zM605.9 265.2h1.59v6.2h-1.59zM607.5 265.2h1.59v6.2h-1.59zM617.1 269.8h1.59v6.2h-1.59zM631.4 269.8h1.59v6.2h-1.59zM641.0 265.2h1.59v6.2h-1.59zM644.2 269.8h1.59v6.2h-1.59zM645.8 269.8h1.59v6.2h-1.59zM649.0 269.8h1.59v6.2h-1.59zM671.3 260.6h1.59v10.8h-1.59zM672.9 265.2h1.59v6.2h-1.59zM677.7 265.2h1.59v6.2h-1.59zM695.2 251.4h1.59v6.2h-1.59zM701.6 251.4h1.59v6.2h-1.59zM711.1 256.0h1.59v6.2h-1.59zM712.7 260.6h1.59v6.2h-1.59zM717.5 265.2h1.59v6.2h-1.59zM725.5 265.2h1.59v10.8h-1.59zM730.3 274.4h1.59v6.2h-1.59zM731.8 274.4h1.59v6.2h-1.59zM735.0 278.9h1.59v6.2h-1.59zM760.5 283.5h1.59v6.2h-1.59zM766.9 292.7h1.59v6.2h-1.59zM794.0 306.5h1.59v6.2h-1.59zM795.6 311.1h1.59v6.2h-1.59zM840.2 256.0h1.59v6.2h-1.59zM843.4 256.0h1.59v6.2h-1.59zM845.0 256.0h1.59v6.2h-1.59zM857.8 265.2h1.59v6.2h-1.59zM865.7 256.0h1.59v6.2h-1.59zM886.5 256.0h1.59v6.2h-1.59zM892.8 256.0h1.59v6.2h-1.59zM904.0 251.4h1.59v10.8h-1.59zM910.4 242.2h1.59v6.2h-1.59zM927.9 251.4h1.59v6.2h-1.59zM940.7 246.8h1.59v6.2h-1.59zM947.0 246.8h1.59v6.2h-1.59zM948.6 246.8h1.59v6.2h-1.59zM963.0 237.6h1.59v10.8h-1.59zM970.9 223.9h1.59v6.2h-1.59zM1004.4 214.7h1.59v6.2h-1.59zM1020.4 214.7h1.59v6.2h-1.59zM1025.1 219.3h1.59v6.2h-1.59zM1029.9 223.9h1.59v6.2h-1.59zM1031.5 228.5h1.59v6.2h-1.59zM1049.1 228.5h1.59v6.2h-1.59zM1061.8 219.3h1.59v6.2h-1.59zM1068.2 228.5h1.59v6.2h-1.59zM1073.0 223.9h1.59v6.2h-1.59zM1077.7 223.9h1.59v6.2h-1.59zM1082.5 223.9h1.59v6.2h-1.59zM1098.5 233.0h1.59v6.2h-1.59zM1133.5 256.0h1.59v6.2h-1.59zM1138.3 260.6h1.59v6.2h-1.59zM1139.9 265.2h1.59v6.2h-1.59zM1143.1 269.8h1.59v6.2h-1.59zM1167.0 251.4h1.59v6.2h-1.59zM1173.4 256.0h1.59v6.2h-1.59zM1178.2 260.6h1.59v6.2h-1.59zM1195.7 251.4h1.59v6.2h-1.59zM1197.3 256.0h1.59v6.2h-1.59zM1198.9 260.6h1.59v6.2h-1.59zM1216.4 265.2h1.59v6.2h-1.59zM1221.2 265.2h1.59v6.2h-1.59zM1232.4 269.8h1.59v88.8h-1.59zM1235.6 292.7h1.59v52.1h-1.59zM1237.1 315.7h1.59v20.0h-1.59zM1253.1 122.9h1.59v65.9h-1.59zM1254.7 164.2h1.59v52.1h-1.59zM1256.3 168.8h1.59v33.7h-1.59zM1264.2 214.7h1.59v6.2h-1.59zM1265.8 219.3h1.59v15.4h-1.59zM1280.2 159.6h1.59v10.8h-1.59zM1283.4 196.3h1.59v6.2h-1.59zM1285.0 200.9h1.59v15.4h-1.59zM1291.3 191.7h1.59v24.5h-1.59zM1292.9 196.3h1.59v29.1h-1.59zM1310.5 173.4h1.59v10.8h-1.59zM1313.7 178.0h1.59v10.8h-1.59zM1315.3 187.1h1.59v6.2h-1.59zM1324.8 182.6h1.59v6.2h-1.59zM1326.4 191.7h1.59v52.1h-1.59zM1343.9 168.8h1.59v10.8h-1.59zM1350.3 159.6h1.59v6.2h-1.59zM1361.5 141.2h1.59v15.4h-1.59zM1366.3 127.5h1.59v33.7h-1.59zM1369.4 141.2h1.59v10.8h-1.59zM1371.0 150.4h1.59v10.8h-1.59zM1372.6 155.0h1.59v15.4h-1.59zM1375.8 164.2h1.59v15.4h-1.59zM1379.0 159.6h1.59v33.7h-1.59zM1395.0 132.1h1.59v20.0h-1.59zM1398.1 141.2h1.59v10.8h-1.59zM1399.7 150.4h1.59v10.8h-1.59zM1401.3 159.6h1.59v15.4h-1.59zM1404.5 173.4h1.59v6.2h-1.59zM1410.9 173.4h1.59v6.2h-1.59zM1425.2 150.4h1.59v10.8h-1.59zM1430.0 155.0h1.59v10.8h-1.59zM1431.6 164.2h1.59v10.8h-1.59zM1436.4 127.5h1.59v20.0h-1.59zM1450.7 99.9h1.59v15.4h-1.59zM1453.9 113.7h1.59v10.8h-1.59zM1457.1 118.3h1.59v10.8h-1.59zM1460.3 122.9h1.59v6.2h-1.59zM1461.9 127.5h1.59v20.0h-1.59zM1463.5 136.7h1.59v10.8h-1.59zM1469.9 141.2h1.59v15.4h-1.59zM1474.7 150.4h1.59v10.8h-1.59zM1477.8 145.8h1.59v10.8h-1.59zM1487.4 122.9h1.59v6.2h-1.59zM1492.2 109.1h1.59v15.4h-1.59zM1493.8 113.7h1.59v15.4h-1.59zM1495.4 118.3h1.59v10.8h-1.59zM1497.0 118.3h1.59v20.0h-1.59zM1500.2 127.5h1.59v15.4h-1.59zM1504.9 136.7h1.59v15.4h-1.59zM1524.1 113.7h1.59v10.8h-1.59zM1528.8 118.3h1.59v6.2h-1.59zM1532.0 122.9h1.59v6.2h-1.59zM1533.6 127.5h1.59v15.4h-1.59zM1535.2 132.1h1.59v6.2h-1.59zM1536.8 132.1h1.59v15.4h-1.59zM1575.1 90.8h1.59v6.2h-1.59zM1591.0 109.1h1.59v6.2h-1.59zM1616.5 104.5h1.59v6.2h-1.59zM1622.9 104.5h1.59v6.2h-1.59zM1624.5 104.5h1.59v6.2h-1.59zM1626.1 104.5h1.59v10.8h-1.59zM1637.2 113.7h1.59v33.7h-1.59zM1638.8 122.9h1.59v15.4h-1.59zM1640.4 132.1h1.59v29.1h-1.59zM1643.6 136.7h1.59v33.7h-1.59zM1645.2 150.4h1.59v24.5h-1.59zM1646.8 155.0h1.59v20.0h-1.59zM1664.3 155.0h1.59v15.4h-1.59zM1672.3 141.2h1.59v10.8h-1.59zM1675.5 145.8h1.59v15.4h-1.59zM1678.7 155.0h1.59v6.2h-1.59zM1686.7 168.8h1.59v6.2h-1.59zM1701.0 155.0h1.59v6.2h-1.59zM1702.6 155.0h1.59v6.2h-1.59zM1709.0 159.6h1.59v15.4h-1.59zM1731.3 178.0h1.59v6.2h-1.59zM1732.9 182.6h1.59v6.2h-1.59zM1734.5 182.6h1.59v6.2h-1.59zM1742.4 182.6h1.59v6.2h-1.59zM1744.0 182.6h1.59v6.2h-1.59zM1761.6 187.1h1.59v15.4h-1.59zM1766.4 200.9h1.59v6.2h-1.59zM1767.9 205.5h1.59v6.2h-1.59zM1769.5 210.1h1.59v10.8h-1.59zM1772.7 214.7h1.59v20.0h-1.59zM1774.3 228.5h1.59v10.8h-1.59zM1780.7 233.0h1.59v10.8h-1.59zM1787.1 233.0h1.59v6.2h-1.59zM1795.0 228.5h1.59v6.2h-1.59zM1799.8 228.5h1.59v6.2h-1.59zM1804.6 223.9h1.59v6.2h-1.59zM1807.8 228.5h1.59v6.2h-1.59zM1809.4 233.0h1.59v10.8h-1.59zM1812.6 242.2h1.59v6.2h-1.59zM1814.2 246.8h1.59v6.2h-1.59zM1822.1 246.8h1.59v6.2h-1.59zM1823.7 251.4h1.59v6.2h-1.59zM1828.5 260.6h1.59v6.2h-1.59zM1830.1 265.2h1.59v10.8h-1.59zM1834.9 269.8h1.59v10.8h-1.59zM1839.7 283.5h1.59v6.2h-1.59zM1863.6 256.0h1.59v6.2h-1.59zM1865.2 256.0h1.59v6.2h-1.59zM1890.7 278.9h1.59v6.2h-1.59zM1898.7 292.7h1.59v6.2h-1.59zM1903.4 292.7h1.59v6.2h-1.59zM1905.0 297.3h1.59v10.8h-1.59zM1908.2 306.5h1.59v10.8h-1.59zM1909.8 311.1h1.59v10.8h-1.59zM1914.6 315.7h1.59v6.2h-1.59zM1916.2 315.7h1.59v6.2h-1.59z" fill="#0080f8"/>
<path d="M13.0 334.0h1.59v6.2h-1.59zM24.1 338.6h1.59v6.2h-1.59zM38.5 338.6h1.59v6.2h-1.59zM56.0 334.0h1.59v6.2h-1.59zM67.1 329.4h1.59v6.2h-1.59zM73.5 324.8h1.59v10.8h-1.59zM75.1 324.8h1.59v6.2h-1.59zM79.9 324.8h1.59v10.8h-1.59zM81.5 315.7h1.59v10.8h-1.59zM83.1 311.1h1.59v6.2h-1.59zM87.9 311.1h1.59v6.2h-1.59zM95.8 311.1h1.59v6.2h-1.59zM97.4 311.1h1.59v6.2h-1.59zM102.2 311.1h1.59v6.2h-1.59zM107.0 311.1h1.59v6.2h-1.59zM108.6 311.1h1.59v6.2h-1.59zM127.7 311.1h1.59v6.2h-1.59zM135.7 311.1h1.59v6.2h-1.59zM137.3 311.1h1.59v6.2h-1.59zM150.0 311.1h1.59v6.2h-1.59zM158.0 315.7h1.59v6.2h-1.59zM162.8 311.1h1.59v6.2h-1.59zM173.9 315.7h1.59v6.2h-1.59zM177.1 320.3h1.59v6.2h-1.59zM178.7 315.7h1.59v6.2h-1.59zM199.5 306.5h1.59v10.8h-1.59zM204.2 301.9h1.59v6.2h-1.59zM207.4 288.1h1.59v15.4h-1.59zM209.0 292.7h1.59v15.4h-1.59zM213.8 301.9h1.59v6.2h-1.59zM225.0 311.1h1.59v6.2h-1.59zM239.3 315.7h1.59v6.2h-1.59zM240.9 315.7h1.59v6.2h-1.59zM255.2 306.5h1.59v6.2h-1.59zM256.8 306.5h1.59v6.2h-1.59zM260.0 306.5h1.59v6.2h-1.59zM266.4 301.9h1.59v6.2h-1.59zM272.8 301.9h1.59v6.2h-1.59zM279.2 306.5h1.59v6.2h-1.59zM283.9 311.1h1.59v6.2h-1.59zM285.5 311.1h1.59v6.2h-1.59zM293.5 306.5h1.59v6.2h-1.59zM295.1 301.9h1.59v6.2h-1.59zM298.3 297.3h1.59v6.2h-1.59zM301.5 292.7h1.59v6.2h-1.59zM315.8 283.5h1.59v6.2h-1.59zM333.3 297.3h1.59v6.2h-1.59zM338.1 297.3h1.59v6.2h-1.59zM363.6 288.1h1.59v6.2h-1.59zM368.4 283.5h1.59v10.8h-1.59zM397.1 306.5h1.59v6.2h-1.59zM406.7 301.9h1.59v6.2h-1.59zM408.3 301.9h1.59v6.2h-1.59zM411.5 297.3h1.59v6.2h-1.59zM414.6 297.3h1.59v6.2h-1.59zM416.2 297.3h1.59v6.2h-1.59zM444.9 297.3h1.59v6.2h-1.59zM449.7 292.7h1.59v6.2h-1.59zM456.1 297.3h1.59v6.2h-1.59zM460.9 297.3h1.59v6.2h-1.59zM473.6 292.7h1.59v6.2h-1.59zM480.0 288.1h1.59v6.2h-1.59zM484.8 288.1h1.59v6.2h-1.59zM489.6 288.1h1.59v6.2h-1.59zM507.1 283.5h1.59v6.2h-1.59zM515.1 288.1h1.59v6.2h-1.59zM539.0 265.2h1.59v6.2h-1.59zM545.3 265.2h1.59v6.2h-1.59zM561.3 265.2h1.59v6.2h-1.59zM569.3 260.6h1.59v6.2h-1.59zM578.8 269.8h1.59v6.2h-1.59zM593.2 269.8h1.59v6.2h-1.59zM594.8 269.8h1.59v6.2h-1.59zM621.9 278.9h1.59v6.2h-1.59zM628.2 274.4h1.59v6.2h-1.59zM633.0 269.8h1.59v6.2h-1.59zM647.4 274.4h1.59v6.2h-1.59zM668.1 269.8h1.59v6.2h-1.59zM669.7 265.2h1.59v6.2h-1.59zM676.1 269.8h1.59v6.2h-1.59zM679.2 265.2h1.59v6.2h-1.59zM680.8 260.6h1.59v6.2h-1.59zM682.4 251.4h1.59v10.8h-1.59zM685.6 251.4h1.59v6.2h-1.59zM706.3 260.6h1.59v6.2h-1.59zM707.9 260.6h1.59v6.2h-1.59zM714.3 265.2h1.59v6.2h-1.59zM720.7 265.2h1.59v6.2h-1.59zM746.2 283.5h1.59v6.2h-1.59zM752.6 283.5h1.59v6.2h-1.59zM782.9 306.5h1.59v15.4h-1.59zM800.4 311.1h1.59v6.2h-1.59zM821.1 311.1h1.59v6.2h-1.59zM824.3 306.5h1.59v6.2h-1.59zM825.9 301.9h1.59v6.2h-1.59zM827.5 297.3h1.59v6.2h-1.59zM829.1 283.5h1.59v15.4h-1.59zM830.7 278.9h1.59v6.2h-1.59zM832.3 269.8h1.59v10.8h-1.59zM837.1 265.2h1.59v6.2h-1.59zM851.4 265.2h1.59v6.2h-1.59zM862.6 260.6h1.59v10.8h-1.59zM868.9 256.0h1.59v6.2h-1.59zM878.5 256.0h1.59v6.2h-1.59zM888.1 256.0h1.59v6.2h-1.59zM889.7 256.0h1.59v6.2h-1.59zM918.3 256.0h1.59v6.2h-1.59zM923.1 251.4h1.59v6.2h-1.59zM953.4 251.4h1.59v6.2h-1.59zM955.0 246.8h1.59v6.2h-1.59zM956.6 246.8h1.59v6.2h-1.59zM967.8 233.0h1.59v6.2h-1.59zM969.4 228.5h1.59v6.2h-1.59zM988.5 228.5h1.59v6.2h-1.59zM999.6 223.9h1.59v6.2h-1.59zM1001.2 219.3h1.59v6.2h-1.59zM1007.6 219.3h1.59v6.2h-1.59zM1036.3 233.0h1.59v6.2h-1.59zM1042.7 233.0h1.59v6.2h-1.59zM1047.5 233.0h1.59v6.2h-1.59zM1052.2 228.5h1.59v10.8h-1.59zM1055.4 228.5h1.59v6.2h-1.59zM1079.3 228.5h1.59v6.2h-1.59zM1101.7 237.6h1.59v6.2h-1.59zM1106.4 237.6h1.59v6.2h-1.59zM1111.2 237.6h1.59v6.2h-1.59zM1114.4 233.0h1.59v6.2h-1.59zM1122.4 242.2h1.59v6.2h-1.59zM1125.6 246.8h1.59v6.2h-1.59zM1146.3 269.8h1.59v6.2h-1.59zM1149.5 265.2h1.59v6.2h-1.59zM1176.6 265.2h1.59v6.2h-1.59zM1184.5 260.6h1.59v6.2h-1.59zM1186.1 251.4h1.59v10.8h-1.59zM1187.7 251.4h1.59v6.2h-1.59zM1205.3 269.8h1.59v6.2h-1.59zM1214.8 265.2h1.59v6.2h-1.59zM1218.0 260.6h1.59v10.8h-1.59zM1234.0 301.9h1.59v52.1h-1.59zM1238.7 315.7h1.59v24.5h-1.59zM1240.3 320.3h1.59v10.8h-1.59zM1241.9 297.3h1.59v24.5h-1.59zM1243.5 283.5h1.59v29.1h-1.59zM1245.1 269.8h1.59v42.9h-1.59zM1246.7 242.2h1.59v42.9h-1.59zM1248.3 242.2h1.59v20.0h-1.59zM1249.9 196.3h1.59v56.7h-1.59zM1251.5 95.3h1.59v125.5h-1.59zM1257.9 168.8h1.59v42.9h-1.59zM1261.1 214.7h1.59v6.2h-1.59zM1267.4 214.7h1.59v15.4h-1.59zM1269.0 196.3h1.59v24.5h-1.59zM1270.6 168.8h1.59v42.9h-1.59zM1273.8 178.0h1.59v15.4h-1.59zM1277.0 150.4h1.59v38.3h-1.59zM1278.6 164.2h1.59v20.0h-1.59zM1289.7 182.6h1.59v29.1h-1.59zM1297.7 187.1h1.59v33.7h-1.59zM1299.3 200.9h1.59v6.2h-1.59zM1300.9 178.0h1.59v24.5h-1.59zM1302.5 164.2h1.59v24.5h-1.59zM1305.7 164.2h1.59v15.4h-1.59zM1318.4 187.1h1.59v6.2h-1.59zM1323.2 182.6h1.59v15.4h-1.59zM1328.0 210.1h1.59v6.2h-1.59zM1331.2 205.5h1.59v15.4h-1.59zM1332.8 187.1h1.59v20.0h-1.59zM1334.4 187.1h1.59v20.0h-1.59zM1336.0 182.6h1.59v20.0h-1.59zM1339.2 173.4h1.59v20.0h-1.59zM1340.8 178.0h1.59v6.2h-1.59zM1342.3 173.4h1.59v10.8h-1.59zM1347.1 159.6h1.59v20.0h-1.59zM1348.7 150.4h1.59v15.4h-1.59zM1351.9 150.4h1.59v15.4h-1.59zM1355.1 150.4h1.59v15.4h-1.59zM1356.7 127.5h1.59v33.7h-1.59zM1359.9 132.1h1.59v29.1h-1.59zM1363.1 122.9h1.59v33.7h-1.59zM1364.7 132.1h1.59v24.5h-1.59zM1374.2 155.0h1.59v15.4h-1.59zM1377.4 159.6h1.59v29.1h-1.59zM1380.6 159.6h1.59v20.0h-1.59zM1382.2 168.8h1.59v10.8h-1.59zM1383.8 164.2h1.59v6.2h-1.59zM1385.4 150.4h1.59v15.4h-1.59zM1387.0 155.0h1.59v6.2h-1.59zM1388.6 150.4h1.59v6.2h-1.59zM1390.2 141.2h1.59v20.0h-1.59zM1391.8 145.8h1.59v6.2h-1.59zM1393.4 141.2h1.59v6.2h-1.59zM1396.5 136.7h1.59v20.0h-1.59zM1414.1 168.8h1.59v10.8h-1.59zM1428.4 155.0h1.59v10.8h-1.59zM1433.2 164.2h1.59v6.2h-1.59zM1434.8 127.5h1.59v38.3h-1.59zM1438.0 122.9h1.59v24.5h-1.59zM1439.6 127.5h1.59v15.4h-1.59zM1441.2 118.3h1.59v15.4h-1.59zM1444.4 104.5h1.59v20.0h-1.59zM1446.0 99.9h1.59v10.8h-1.59zM1449.1 95.3h1.59v10.8h-1.59zM1455.5 118.3h1.59v6.2h-1.59zM1465.1 141.2h1.59v10.8h-1.59zM1476.2 145.8h1.59v15.4h-1.59zM1479.4 141.2h1.59v15.4h-1.59zM1481.0 136.7h1.59v6.2h-1.59zM1484.2 122.9h1.59v15.4h-1.59zM1485.8 118.3h1.59v15.4h-1.59zM1489.0 118.3h1.59v10.8h-1.59zM1490.6 113.7h1.59v6.2h-1.59zM1498.6 127.5h1.59v15.4h-1.59zM1512.9 127.5h1.59v15.4h-1.59zM1514.5 127.5h1.59v10.8h-1.59zM1519.3 118.3h1.59v10.8h-1.59zM1522.5 113.7h1.59v10.8h-1.59zM1540.0 132.1h1.59v10.8h-1.59zM1541.6 122.9h1.59v10.8h-1.59zM1543.2 118.3h1.59v10.8h-1.59zM1549.6 104.5h1.59v6.2h-1.59zM1552.8 109.1h1.59v6.2h-1.59zM1557.5 99.9h1.59v6.2h-1.59zM1560.7 99.9h1.59v6.2h-1.59zM1565.5 95.3h1.59v6.2h-1.59zM1568.7 90.8h1.59v6.2h-1.59zM1571.9 90.8h1.59v6.2h-1.59zM1589.4 109.1h1.59v6.2h-1.59zM1592.6 109.1h1.59v6.2h-1.59zM1595.8 104.5h1.59v6.2h-1.59zM1610.1 109.1h1.59v6.2h-1.59zM1614.9 104.5h1.59v10.8h-1.59zM1629.3 109.1h1.59v6.2h-1.59zM1650.0 168.8h1.59v6.2h-1.59zM1651.6 155.0h1.59v15.4h-1.59zM1656.4 159.6h1.59v6.2h-1.59zM1661.1 150.4h1.59v15.4h-1.59zM1665.9 164.2h1.59v6.2h-1.59zM1667.5 159.6h1.59v6.2h-1.59zM1669.1 155.0h1.59v6.2h-1.59zM1670.7 141.2h1.59v15.4h-1.59zM1688.2 168.8h1.59v6.2h-1.59zM1691.4 159.6h1.59v15.4h-1.59zM1723.3 173.4h1.59v6.2h-1.59zM1740.8 178.0h1.59v20.0h-1.59zM1753.6 191.7h1.59v6.2h-1.59zM1771.1 210.1h1.59v10.8h-1.59zM1785.5 233.0h1.59v15.4h-1.59zM1793.5 233.0h1.59v6.2h-1.59zM1803.0 228.5h1.59v6.2h-1.59zM1820.5 246.8h1.59v6.2h-1.59zM1841.3 288.1h1.59v6.2h-1.59zM1844.5 283.5h1.59v6.2h-1.59zM1846.1 274.4h1.59v10.8h-1.59zM1857.2 265.2h1.59v15.4h-1.59zM1858.8 260.6h1.59v6.2h-1.59zM1866.8 260.6h1.59v6.2h-1.59zM1874.7 269.8h1.59v6.2h-1.59zM1911.4 315.7h1.59v6.2h-1.59zM1922.6 311.1h1.59v10.8h-1.59zM1924.2 311.1h1.59v6.2h-1.59z" fill="#ff0000"/>
<path d="M19.2 657.6h1.59v1.6h-1.59zM25.6 666.6h1.59v1.6h-1.59zM28.8 666.6h1.59v1.6h-1.59zM32.0 669.6h1.59v1.6h-1.59zM33.5 669.6h1.59v1.6h-1.59zM35.1 666.6h1.59v4.6h-1.59zM36.7 669.6h1.59v1.6h-1.59zM38.3 669.6h1.59v1.6h-1.59zM39.9 669.6h1.59v1.6h-1.59zM43.1 669.6h1.59v1.6h-1.59zM44.7 669.6h1.59v1.6h-1.59zM47.9 669.6h1.59v1.6h-1.59zM51.1 669.6h1.59v1.6h-1.59zM55.9 669.6h1.59v1.6h-1.59zM65.4 681.7h1.59v1.6h-1.59zM67.0 681.7h1.59v1.6h-1.59zM73.4 681.7h1.59v1.6h-1.59zM75.0 684.7h1.59v1.6h-1.59zM79.8 684.7h1.59v1.6h-1.59zM92.5 648.5h1.59v1.6h-1.59zM97.3 651.5h1.59v1.6h-1.59zM103.7 651.5h1.59v1.6h-1.59zM105.3 654.5h1.59v1.6h-1.59zM116.4 657.6h1.59v1.6h-1.59zM118.0 657.6h1.59v1.6h-1.59zM119.6 657.6h1.59v1.6h-1.59zM122.8 657.6h1.59v1.6h-1.59zM127.6 663.6h1.59v1.6h-1.59zM138.8 657.6h1.59v1.6h-1.59zM140.3 657.6h1.59v1.6h-1.59zM141.9 654.5h1.59v1.6h-1.59zM143.5 654.5h1.59v1.6h-1.59zM149.9 657.6h1.59v1.6h-1.59zM153.1 654.5h1.59v1.6h-1.59zM154.7 651.5h1.59v1.6h-1.59zM157.9 654.5h1.59v1.6h-1.59zM159.5 654.5h1.59v1.6h-1.59zM162.7 657.6h1.59v1.6h-1.59zM164.3 657.6h1.59v1.6h-1.59zM167.4 660.6h1.59v1.6h-1.59zM169.0 660.6h1.59v1.6h-1.59zM170.6 663.6h1.59v1.6h-1.59zM173.8 663.6h1.59v1.6h-1.59zM175.4 666.6h1.59v1.6h-1.59zM178.6 666.6h1.59v1.6h-1.59zM185.0 660.6h1.59v4.6h-1.59zM186.6 657.6h1.59v4.6h-1.59zM192.9 663.6h1.59v1.6h-1.59zM196.1 663.6h1.59v1.6h-1.59zM199.3 666.6h1.59v1.6h-1.59zM200.9 666.6h1.59v1.6h-1.59zM202.5 669.6h1.59v1.6h-1.59zM204.1 666.6h1.59v1.6h-1.59zM207.3 663.6h1.59v1.6h-1.59zM212.1 666.6h1.59v1.6h-1.59zM213.7 666.6h1.59v1.6h-1.59zM215.3 669.6h1.59v1.6h-1.59zM216.9 672.7h1.59v1.6h-1.59zM223.2 675.7h1.59v1.6h-1.59zM224.8 675.7h1.59v1.6h-1.59zM226.4 675.7h1.59v1.6h-1.59zM236.0 681.7h1.59v1.6h-1.59zM240.8 681.7h1.59v1.6h-1.59zM245.6 687.8h1.59v1.6h-1.59zM258.3 687.8h1.59v1.6h-1.59zM259.9 681.7h1.59v1.6h-1.59zM264.7 678.7h1.59v1.6h-1.59zM267.9 678.7h1.59v1.6h-1.59zM272.6 678.7h1.59v4.6h-1.59zM274.2 675.7h1.59v1.6h-1.59zM275.8 675.7h1.59v1.6h-1.59zM277.4 672.7h1.59v1.6h-1.59zM279.0 675.7h1.59v1.6h-1.59zM283.8 681.7h1.59v1.6h-1.59zM287.0 681.7h1.59v1.6h-1.59zM293.4 678.7h1.59v1.6h-1.59zM299.7 681.7h1.59v1.6h-1.59zM301.3 681.7h1.59v4.6h-1.59zM302.9 681.7h1.59v1.6h-1.59zM304.5 678.7h1.59v4.6h-1.59zM307.7 681.7h1.59v1.6h-1.59zM315.7 681.7h1.59v1.6h-1.59zM317.3 681.7h1.59v1.6h-1.59zM320.5 684.7h1.59v1.6h-1.59zM323.7 684.7h1.59v1.6h-1.59zM326.8 684.7h1.59v1.6h-1.59zM328.4 684.7h1.59v1.6h-1.59zM331.6 687.8h1.59v1.6h-1.59zM339.6 690.8h1.59v1.6h-1.59zM342.8 687.8h1.59v1.6h-1.59zM346.0 684.7h1.59v1.6h-1.59zM349.2 684.7h1.59v1.6h-1.59zM350.8 684.7h1.59v1.6h-1.59zM353.9 681.7h1.59v1.6h-1.59zM357.1 681.7h1.59v1.6h-1.59zM358.7 678.7h1.59v1.6h-1.59zM361.9 675.7h1.59v4.6h-1.59zM365.1 678.7h1.59v1.6h-1.59zM368.3 675.7h1.59v1.6h-1.59zM374.7 678.7h1.59v1.6h-1.59zM377.9 678.7h1.59v1.6h-1.59zM384.2 681.7h1.59v1.6h-1.59zM387.4 681.7h1.59v1.6h-1.59zM389.0 681.7h1.59v4.6h-1.59zM397.0 681.7h1.59v1.6h-1.59zM403.4 681.7h1.59v1.6h-1.59zM405.0 681.7h1.59v1.6h-1.59zM409.7 678.7h1.59v4.6h-1.59zM412.9 681.7h1.59v1.6h-1.59zM417.7 678.7h1.59v1.6h-1.59zM419.3 678.7h1.59v1.6h-1.59zM420.9 678.7h1.59v1.6h-1.59zM422.5 678.7h1.59v1.6h-1.59zM424.1 678.7h1.59v1.6h-1.59zM425.7 681.7h1.59v4.6h-1.59zM428.9 678.7h1.59v1.6h-1.59zM432.0 678.7h1.59v1.6h-1.59zM433.6 675.7h1.59v1.6h-1.59zM436.8 672.7h1.59v1.6h-1.59zM441.6 675.7h1.59v1.6h-1.59zM443.2 675.7h1.59v1.6h-1.59zM446.4 672.7h1.59v1.6h-1.59zM448.0 672.7h1.59v1.6h-1.59zM449.6 666.6h1.59v1.6h-1.59zM451.2 660.6h1.59v1.6h-1.59zM459.1 669.6h1.59v1.6h-1.59zM462.3 672.7h1.59v1.6h-1.59zM471.9 675.7h1.59v1.6h-1.59zM473.5 675.7h1.59v1.6h-1.59zM478.3 672.7h1.59v1.6h-1.59zM481.5 666.6h1.59v4.6h-1.59zM486.2 666.6h1.59v1.6h-1.59zM492.6 666.6h1.59v4.6h-1.59zM494.2 669.6h1.59v1.6h-1.59zM502.2 672.7h1.59v1.6h-1.59zM503.8 669.6h1.59v1.6h-1.59zM510.2 669.6h1.59v1.6h-1.59zM513.3 669.6h1.59v1.6h-1.59zM514.9 669.6h1.59v4.6h-1.59zM521.3 666.6h1.59v1.6h-1.59zM524.5 663.6h1.59v1.6h-1.59zM532.5 660.6h1.59v1.6h-1.59zM534.1 663.6h1.59v1.6h-1.59zM535.7 660.6h1.59v1.6h-1.59zM538.8 657.6h1.59v4.6h-1.59zM542.0 657.6h1.59v1.6h-1.59zM545.2 651.5h1.59v1.6h-1.59zM551.6 660.6h1.59v1.6h-1.59zM559.6 675.7h1.59v1.6h-1.59zM561.2 675.7h1.59v1.6h-1.59zM564.4 678.7h1.59v1.6h-1.59zM565.9 678.7h1.59v1.6h-1.59zM569.1 681.7h1.59v1.6h-1.59zM575.5 684.7h1.59v1.6h-1.59zM577.1 684.7h1.59v1.6h-1.59zM581.9 684.7h1.59v1.6h-1.59zM583.5 681.7h1.59v1.6h-1.59zM586.7 681.7h1.59v1.6h-1.59zM589.9 681.7h1.59v1.6h-1.59zM593.0 678.7h1.59v1.6h-1.59zM594.6 678.7h1.59v1.6h-1.59zM597.8 684.7h1.59v1.6h-1.59zM599.4 684.7h1.59v1.6h-1.59zM601.0 681.7h1.59v1.6h-1.59zM609.0 675.7h1.59v1.6h-1.59zM613.8 675.7h1.59v1.6h-1.59zM620.1 675.7h1.59v1.6h-1.59zM621.7 675.7h1.59v1.6h-1.59zM623.3 675.7h1.59v4.6h-1.59zM631.3 678.7h1.59v1.6h-1.59zM636.1 678.7h1.59v1.6h-1.59zM639.3 678.7h1.59v4.6h-1.59zM648.8 693.8h1.59v1.6h-1.59zM653.6 696.8h1.59v1.6h-1.59zM656.8 696.8h1.59v1.6h-1.59zM671.1 699.8h1.59v4.6h-1.59zM672.7 699.8h1.59v1.6h-1.59zM685.5 654.5h1.59v1.6h-1.59zM688.7 654.5h1.59v4.6h-1.59zM690.3 657.6h1.59v1.6h-1.59zM691.9 660.6h1.59v1.6h-1.59zM695.1 660.6h1.59v1.6h-1.59zM703.0 660.6h1.59v1.6h-1.59zM706.2 660.6h1.59v1.6h-1.59zM709.4 660.6h1.59v1.6h-1.59zM717.4 669.6h1.59v1.6h-1.59zM722.2 669.6h1.59v1.6h-1.59zM725.3 669.6h1.59v4.6h-1.59zM733.3 687.8h1.59v13.7h-1.59zM736.5 696.8h1.59v1.6h-1.59zM738.1 696.8h1.59v1.6h-1.59zM744.5 678.7h1.59v1.6h-1.59zM749.3 678.7h1.59v1.6h-1.59zM755.6 693.8h1.59v1.6h-1.59zM757.2 696.8h1.59v1.6h-1.59zM760.4 693.8h1.59v1.6h-1.59zM762.0 693.8h1.59v1.6h-1.59zM763.6 690.8h1.59v1.6h-1.59zM768.4 690.8h1.59v1.6h-1.59zM770.0 693.8h1.59v1.6h-1.59zM784.3 718.0h1.59v1.6h-1.59zM795.5 742.1h1.59v1.6h-1.59zM801.9 736.1h1.59v1.6h-1.59zM803.5 733.1h1.59v1.6h-1.59zM808.2 733.1h1.59v1.6h-1.59zM811.4 730.0h1.59v1.6h-1.59zM813.0 727.0h1.59v4.6h-1.59zM814.6 730.0h1.59v1.6h-1.59zM816.2 733.1h1.59v1.6h-1.59zM825.8 730.0h1.59v1.6h-1.59zM833.7 711.9h1.59v1.6h-1.59zM836.9 711.9h1.59v1.6h-1.59zM844.9 702.9h1.59v1.6h-1.59zM846.5 702.9h1.59v1.6h-1.59zM848.1 699.8h1.59v1.6h-1.59zM849.7 699.8h1.59v1.6h-1.59zM851.3 696.8h1.59v1.6h-1.59zM852.9 693.8h1.59v1.6h-1.59zM860.8 696.8h1.59v1.6h-1.59zM864.0 699.8h1.59v1.6h-1.59zM867.2 699.8h1.59v1.6h-1.59zM873.6 693.8h1.59v1.6h-1.59zM875.2 690.8h1.59v1.6h-1.59zM876.8 690.8h1.59v1.6h-1.59zM878.4 690.8h1.59v1.6h-1.59zM884.7 699.8h1.59v1.6h-1.59zM897.5 730.0h1.59v1.6h-1.59zM905.5 705.9h1.59v1.6h-1.59zM908.7 702.9h1.59v1.6h-1.59zM918.2 711.9h1.59v1.6h-1.59zM919.8 711.9h1.59v1.6h-1.59zM924.6 708.9h1.59v4.6h-1.59zM932.6 727.0h1.59v4.6h-1.59zM934.2 730.0h1.59v1.6h-1.59zM945.3 711.9h1.59v1.6h-1.59zM946.9 708.9h1.59v1.6h-1.59zM948.5 711.9h1.59v1.6h-1.59zM951.7 708.9h1.59v1.6h-1.59zM953.3 708.9h1.59v1.6h-1.59zM956.5 708.9h1.59v1.6h-1.59zM959.7 708.9h1.59v1.6h-1.59zM964.4 708.9h1.59v1.6h-1.59zM969.2 702.9h1.59v1.6h-1.59zM975.6 699.8h1.59v1.6h-1.59zM978.8 696.8h1.59v1.6h-1.59zM980.4 696.8h1.59v1.6h-1.59zM986.8 690.8h1.59v4.6h-1.59zM989.9 693.8h1.59v1.6h-1.59zM991.5 693.8h1.59v4.6h-1.59zM993.1 693.8h1.59v1.6h-1.59zM994.7 690.8h1.59v1.6h-1.59zM996.3 693.8h1.59v1.6h-1.59zM997.9 690.8h1.59v1.6h-1.59zM1002.7 696.8h1.59v1.6h-1.59zM1004.3 696.8h1.59v1.6h-1.59zM1009.1 696.8h1.59v1.6h-1.59zM1013.9 699.8h1.59v4.6h-1.59zM1015.5 702.9h1.59v1.6h-1.59zM1034.6 681.7h1.59v1.6h-1.59zM1036.2 678.7h1.59v1.6h-1.59zM1037.8 678.7h1.59v1.6h-1.59zM1039.4 678.7h1.59v1.6h-1.59zM1045.7 678.7h1.59v1.6h-1.59zM1048.9 681.7h1.59v1.6h-1.59zM1050.5 684.7h1.59v4.6h-1.59zM1056.9 678.7h1.59v1.6h-1.59zM1061.7 678.7h1.59v1.6h-1.59zM1063.3 681.7h1.59v1.6h-1.59zM1064.9 681.7h1.59v1.6h-1.59zM1066.5 684.7h1.59v1.6h-1.59zM1068.1 687.8h1.59v1.6h-1.59zM1072.8 684.7h1.59v1.6h-1.59zM1074.4 681.7h1.59v1.6h-1.59zM1080.8 681.7h1.59v1.6h-1.59zM1082.4 681.7h1.59v1.6h-1.59zM1090.4 681.7h1.59v1.6h-1.59zM1093.6 684.7h1.59v1.6h-1.59zM1095.2 681.7h1.59v1.6h-1.59zM1098.3 678.7h1.59v1.6h-1.59zM1099.9 675.7h1.59v1.6h-1.59zM1103.1 675.7h1.59v1.6h-1.59zM1106.3 669.6h1.59v1.6h-1.59zM1112.7 678.7h1.59v1.6h-1.59zM1115.9 675.7h1.59v4.6h-1.59zM1117.5 675.7h1.59v1.6h-1.59zM1128.6 672.7h1.59v4.6h-1.59zM1130.2 678.7h1.59v1.6h-1.59zM1135.0 678.7h1.59v1.6h-1.59zM1149.3 690.8h1.59v1.6h-1.59zM1152.5 693.8h1.59v1.6h-1.59zM1155.7 693.8h1.59v1.6h-1.59zM1163.7 693.8h1.59v1.6h-1.59zM1165.3 693.8h1.59v1.6h-1.59zM1166.9 693.8h1.59v4.6h-1.59zM1170.1 693.8h1.59v1.6h-1.59zM1174.9 696.8h1.59v1.6h-1.59zM1181.2 699.8h1.59v1.6h-1.59zM1182.8 699.8h1.59v1.6h-1.59zM1190.8 678.7h1.59v7.6h-1.59zM1194.0 678.7h1.59v1.6h-1.59zM1205.1 714.9h1.59v1.6h-1.59zM1209.9 714.9h1.59v1.6h-1.59zM1224.3 708.9h1.59v1.6h-1.59zM1225.9 708.9h1.59v1.6h-1.59zM1229.0 708.9h1.59v1.6h-1.59zM1230.6 708.9h1.59v16.7h-1.59zM1256.1 675.7h1.59v1.6h-1.59zM1267.3 672.7h1.59v4.6h-1.59zM1280.1 660.6h1.59v7.6h-1.59zM1294.4 708.9h1.59v10.7h-1.59zM1307.2 705.9h1.59v16.7h-1.59zM1308.7 702.9h1.59v16.7h-1.59zM1311.9 699.8h1.59v7.6h-1.59zM1323.1 696.8h1.59v1.6h-1.59zM1327.9 714.9h1.59v1.6h-1.59zM1340.6 660.6h1.59v1.6h-1.59zM1342.2 660.6h1.59v1.6h-1.59zM1345.4 660.6h1.59v1.6h-1.59zM1361.4 621.3h1.59v10.7h-1.59zM1382.1 603.2h1.59v1.6h-1.59zM1386.9 597.2h1.59v4.6h-1.59zM1399.6 591.1h1.59v4.6h-1.59zM1401.2 594.1h1.59v4.6h-1.59zM1402.8 594.1h1.59v1.6h-1.59zM1407.6 573.0h1.59v13.7h-1.59zM1412.4 567.0h1.59v7.6h-1.59zM1421.9 527.7h1.59v4.6h-1.59zM1423.5 527.7h1.59v1.6h-1.59zM1425.1 527.7h1.59v1.6h-1.59zM1426.7 521.7h1.59v7.6h-1.59zM1428.3 527.7h1.59v1.6h-1.59zM1431.5 524.7h1.59v1.6h-1.59zM1444.2 509.6h1.59v7.6h-1.59zM1445.8 509.6h1.59v10.7h-1.59zM1449.0 515.6h1.59v7.6h-1.59zM1461.8 542.8h1.59v13.7h-1.59zM1463.4 545.8h1.59v4.6h-1.59zM1466.6 551.9h1.59v1.6h-1.59zM1477.7 521.7h1.59v1.6h-1.59zM1484.1 503.5h1.59v10.7h-1.59zM1488.9 497.5h1.59v7.6h-1.59zM1490.5 494.5h1.59v4.6h-1.59zM1500.0 503.5h1.59v1.6h-1.59zM1501.6 503.5h1.59v4.6h-1.59zM1511.2 494.5h1.59v7.6h-1.59zM1512.8 497.5h1.59v4.6h-1.59zM1514.4 494.5h1.59v4.6h-1.59zM1520.8 476.4h1.59v1.6h-1.59zM1527.1 464.3h1.59v7.6h-1.59zM1530.3 461.3h1.59v7.6h-1.59zM1531.9 464.3h1.59v1.6h-1.59zM1533.5 464.3h1.59v1.6h-1.59zM1538.3 467.3h1.59v10.7h-1.59zM1557.4 440.1h1.59v1.6h-1.59zM1559.0 440.1h1.59v1.6h-1.59zM1563.8 437.1h1.59v1.6h-1.59zM1567.0 440.1h1.59v1.6h-1.59zM1581.3 443.1h1.59v4.6h-1.59zM1582.9 449.2h1.59v1.6h-1.59zM1584.5 452.2h1.59v1.6h-1.59zM1587.7 455.2h1.59v1.6h-1.59zM1592.5 455.2h1.59v1.6h-1.59zM1594.1 455.2h1.59v1.6h-1.59zM1602.0 452.2h1.59v1.6h-1.59zM1618.0 485.4h1.59v1.6h-1.59zM1619.6 476.4h1.59v4.6h-1.59zM1621.2 476.4h1.59v1.6h-1.59zM1624.4 485.4h1.59v1.6h-1.59zM1632.3 485.4h1.59v1.6h-1.59zM1633.9 485.4h1.59v1.6h-1.59zM1659.4 548.8h1.59v1.6h-1.59zM1665.8 551.9h1.59v1.6h-1.59zM1678.6 560.9h1.59v13.7h-1.59zM1732.8 597.2h1.59v1.6h-1.59zM1743.9 597.2h1.59v7.6h-1.59zM1745.5 603.2h1.59v1.6h-1.59zM1755.1 606.2h1.59v4.6h-1.59zM1775.8 657.6h1.59v13.7h-1.59zM1790.1 654.5h1.59v1.6h-1.59zM1793.3 657.6h1.59v1.6h-1.59zM1802.9 654.5h1.59v4.6h-1.59zM1831.6 699.8h1.59v1.6h-1.59zM1836.4 702.9h1.59v1.6h-1.59zM1838.0 702.9h1.59v1.6h-1.59zM1842.7 705.9h1.59v1.6h-1.59zM1847.5 693.8h1.59v7.6h-1.59zM1853.9 675.7h1.59v13.7h-1.59zM1861.9 681.7h1.59v7.6h-1.59zM1865.1 672.7h1.59v13.7h-1.59zM1881.0 675.7h1.59v1.6h-1.59zM1882.6 675.7h1.59v1.6h-1.59zM1884.2 678.7h1.59v1.6h-1.59zM1885.8 678.7h1.59v7.6h-1.59zM1898.5 696.8h1.59v1.6h-1.59zM1901.7 699.8h1.59v1.6h-1.59zM1903.3 696.8h1.59v1.6h-1.59zM1917.7 724.0h1.59v1.6h-1.59zM1924.0 721.0h1.59v4.6h-1.59zM1925.6 718.0h1.59v1.6h-1.59z" fill="#e8e870"/>
<path d="M22.4 657.6h1.59v4.6h-1.59zM30.4 666.6h1.59v4.6h-1.59zM59.1 666.6h1.59v7.6h-1.59zM60.6 672.7h1.59v4.6h-1.59zM62.2 675.7h1.59v4.6h-1.59zM71.8 678.7h1.59v7.6h-1.59zM108.5 654.5h1.59v4.6h-1.59zM113.2 657.6h1.59v4.6h-1.59zM114.8 657.6h1.59v4.6h-1.59zM134.0 660.6h1.59v4.6h-1.59zM148.3 651.5h1.59v4.6h-1.59zM191.4 660.6h1.59v7.6h-1.59zM210.5 663.6h1.59v4.6h-1.59zM229.6 675.7h1.59v7.6h-1.59zM250.3 687.8h1.59v4.6h-1.59zM271.1 675.7h1.59v7.6h-1.59zM285.4 678.7h1.59v4.6h-1.59zM295.0 675.7h1.59v4.6h-1.59zM296.6 678.7h1.59v4.6h-1.59zM318.9 678.7h1.59v4.6h-1.59zM330.0 684.7h1.59v4.6h-1.59zM333.2 687.8h1.59v4.6h-1.59zM371.5 675.7h1.59v4.6h-1.59zM376.3 675.7h1.59v4.6h-1.59zM392.2 681.7h1.59v4.6h-1.59zM406.5 678.7h1.59v7.6h-1.59zM452.8 660.6h1.59v4.6h-1.59zM454.4 663.6h1.59v4.6h-1.59zM457.6 666.6h1.59v4.6h-1.59zM500.6 669.6h1.59v4.6h-1.59zM550.0 651.5h1.59v10.7h-1.59zM553.2 660.6h1.59v4.6h-1.59zM554.8 663.6h1.59v4.6h-1.59zM556.4 666.6h1.59v4.6h-1.59zM580.3 681.7h1.59v4.6h-1.59zM644.1 681.7h1.59v7.6h-1.59zM645.6 687.8h1.59v4.6h-1.59zM647.2 687.8h1.59v4.6h-1.59zM663.2 687.8h1.59v4.6h-1.59zM668.0 690.8h1.59v7.6h-1.59zM698.2 657.6h1.59v4.6h-1.59zM701.4 657.6h1.59v4.6h-1.59zM711.0 660.6h1.59v4.6h-1.59zM714.2 663.6h1.59v4.6h-1.59zM726.9 672.7h1.59v7.6h-1.59zM728.5 678.7h1.59v4.6h-1.59zM730.1 681.7h1.59v7.6h-1.59zM731.7 687.8h1.59v4.6h-1.59zM750.8 678.7h1.59v7.6h-1.59zM752.4 684.7h1.59v4.6h-1.59zM754.0 687.8h1.59v4.6h-1.59zM773.2 693.8h1.59v7.6h-1.59zM774.8 699.8h1.59v4.6h-1.59zM776.4 702.9h1.59v4.6h-1.59zM781.1 705.9h1.59v13.7h-1.59zM787.5 714.9h1.59v7.6h-1.59zM789.1 721.0h1.59v10.7h-1.59zM790.7 730.0h1.59v4.6h-1.59zM821.0 730.0h1.59v4.6h-1.59zM859.2 693.8h1.59v4.6h-1.59zM865.6 693.8h1.59v7.6h-1.59zM886.3 696.8h1.59v4.6h-1.59zM887.9 699.8h1.59v7.6h-1.59zM891.1 705.9h1.59v4.6h-1.59zM892.7 708.9h1.59v7.6h-1.59zM894.3 714.9h1.59v7.6h-1.59zM895.9 721.0h1.59v10.7h-1.59zM907.1 702.9h1.59v4.6h-1.59zM913.4 708.9h1.59v4.6h-1.59zM916.6 711.9h1.59v4.6h-1.59zM926.2 711.9h1.59v7.6h-1.59zM929.4 718.0h1.59v7.6h-1.59zM931.0 724.0h1.59v4.6h-1.59zM985.2 693.8h1.59v4.6h-1.59zM999.5 690.8h1.59v4.6h-1.59zM1042.6 675.7h1.59v4.6h-1.59zM1087.2 681.7h1.59v4.6h-1.59zM1092.0 678.7h1.59v4.6h-1.59zM1111.1 669.6h1.59v7.6h-1.59zM1136.6 678.7h1.59v4.6h-1.59zM1138.2 681.7h1.59v4.6h-1.59zM1139.8 684.7h1.59v4.6h-1.59zM1143.0 687.8h1.59v4.6h-1.59zM1146.2 690.8h1.59v4.6h-1.59zM1197.2 678.7h1.59v7.6h-1.59zM1198.8 684.7h1.59v7.6h-1.59zM1202.0 696.8h1.59v10.7h-1.59zM1203.5 705.9h1.59v10.7h-1.59zM1211.5 711.9h1.59v4.6h-1.59zM1214.7 708.9h1.59v7.6h-1.59zM1217.9 702.9h1.59v28.8h-1.59zM1221.1 714.9h1.59v7.6h-1.59zM1232.2 718.0h1.59v34.8h-1.59zM1233.8 702.9h1.59v68.0h-1.59zM1237.0 724.0h1.59v43.9h-1.59zM1240.2 742.1h1.59v34.8h-1.59zM1253.0 618.3h1.59v59.0h-1.59zM1254.6 654.5h1.59v34.8h-1.59zM1262.5 657.6h1.59v28.8h-1.59zM1265.7 660.6h1.59v28.8h-1.59zM1272.1 660.6h1.59v16.7h-1.59zM1273.7 663.6h1.59v10.7h-1.59zM1283.2 657.6h1.59v37.8h-1.59zM1284.8 678.7h1.59v22.7h-1.59zM1286.4 693.8h1.59v7.6h-1.59zM1291.2 690.8h1.59v13.7h-1.59zM1292.8 702.9h1.59v25.8h-1.59zM1296.0 718.0h1.59v4.6h-1.59zM1297.6 721.0h1.59v7.6h-1.59zM1305.6 708.9h1.59v13.7h-1.59zM1313.5 696.8h1.59v22.7h-1.59zM1316.7 711.9h1.59v10.7h-1.59zM1324.7 696.8h1.59v7.6h-1.59zM1326.3 702.9h1.59v28.8h-1.59zM1339.0 657.6h1.59v4.6h-1.59zM1367.7 609.2h1.59v7.6h-1.59zM1370.9 582.1h1.59v34.8h-1.59zM1374.1 600.2h1.59v13.7h-1.59zM1393.2 585.1h1.59v7.6h-1.59zM1396.4 588.1h1.59v4.6h-1.59zM1436.3 518.6h1.59v4.6h-1.59zM1447.4 509.6h1.59v10.7h-1.59zM1457.0 506.6h1.59v16.7h-1.59zM1458.6 509.6h1.59v34.8h-1.59zM1460.2 524.7h1.59v19.7h-1.59zM1492.1 485.4h1.59v19.7h-1.59zM1495.2 494.5h1.59v4.6h-1.59zM1496.8 488.4h1.59v19.7h-1.59zM1498.4 500.5h1.59v4.6h-1.59zM1503.2 491.5h1.59v19.7h-1.59zM1508.0 500.5h1.59v13.7h-1.59zM1525.5 464.3h1.59v7.6h-1.59zM1535.1 464.3h1.59v7.6h-1.59zM1565.4 437.1h1.59v4.6h-1.59zM1573.4 422.0h1.59v10.7h-1.59zM1574.9 431.1h1.59v16.7h-1.59zM1576.5 437.1h1.59v16.7h-1.59zM1605.2 452.2h1.59v4.6h-1.59zM1606.8 455.2h1.59v4.6h-1.59zM1608.4 458.2h1.59v4.6h-1.59zM1611.6 461.3h1.59v4.6h-1.59zM1614.8 464.3h1.59v13.7h-1.59zM1627.5 482.4h1.59v4.6h-1.59zM1635.5 491.5h1.59v43.9h-1.59zM1638.7 524.7h1.59v25.8h-1.59zM1641.9 545.8h1.59v25.8h-1.59zM1643.5 560.9h1.59v31.8h-1.59zM1646.7 576.0h1.59v37.8h-1.59zM1664.2 545.8h1.59v7.6h-1.59zM1667.4 551.9h1.59v22.7h-1.59zM1673.8 545.8h1.59v7.6h-1.59zM1677.0 551.9h1.59v19.7h-1.59zM1680.2 567.0h1.59v7.6h-1.59zM1681.7 573.0h1.59v10.7h-1.59zM1683.3 582.1h1.59v7.6h-1.59zM1684.9 588.1h1.59v16.7h-1.59zM1688.1 603.2h1.59v7.6h-1.59zM1696.1 563.9h1.59v4.6h-1.59zM1700.9 560.9h1.59v7.6h-1.59zM1702.5 567.0h1.59v10.7h-1.59zM1704.1 570.0h1.59v10.7h-1.59zM1705.7 579.0h1.59v7.6h-1.59zM1707.2 585.1h1.59v4.6h-1.59zM1708.8 588.1h1.59v7.6h-1.59zM1710.4 591.1h1.59v4.6h-1.59zM1713.6 594.1h1.59v7.6h-1.59zM1715.2 600.2h1.59v4.6h-1.59zM1731.2 588.1h1.59v22.7h-1.59zM1735.9 597.2h1.59v16.7h-1.59zM1753.5 603.2h1.59v4.6h-1.59zM1758.3 609.2h1.59v7.6h-1.59zM1763.0 615.3h1.59v7.6h-1.59zM1764.6 621.3h1.59v7.6h-1.59zM1767.8 624.3h1.59v10.7h-1.59zM1769.4 630.4h1.59v4.6h-1.59zM1771.0 633.4h1.59v10.7h-1.59zM1772.6 642.5h1.59v4.6h-1.59zM1774.2 648.5h1.59v16.7h-1.59zM1779.0 657.6h1.59v10.7h-1.59zM1782.2 660.6h1.59v10.7h-1.59zM1796.5 657.6h1.59v4.6h-1.59zM1806.1 657.6h1.59v4.6h-1.59zM1809.3 660.6h1.59v16.7h-1.59zM1810.9 663.6h1.59v31.8h-1.59zM1814.0 681.7h1.59v4.6h-1.59zM1817.2 681.7h1.59v13.7h-1.59zM1822.0 678.7h1.59v7.6h-1.59zM1823.6 684.7h1.59v7.6h-1.59zM1825.2 684.7h1.59v10.7h-1.59zM1828.4 690.8h1.59v19.7h-1.59zM1839.6 702.9h1.59v4.6h-1.59zM1860.3 675.7h1.59v7.6h-1.59zM1868.2 675.7h1.59v4.6h-1.59zM1871.4 678.7h1.59v10.7h-1.59zM1874.6 681.7h1.59v4.6h-1.59zM1887.4 678.7h1.59v7.6h-1.59zM1889.0 684.7h1.59v4.6h-1.59zM1892.2 687.8h1.59v4.6h-1.59zM1906.5 693.8h1.59v4.6h-1.59zM1909.7 702.9h1.59v10.7h-1.59zM1911.3 711.9h1.59v7.6h-1.59z" fill="#0080f8"/>
<path d="M57.5 666.6h1.59v4.6h-1.59zM81.4 672.7h1.59v10.7h-1.59zM84.6 660.6h1.59v10.7h-1.59zM86.2 657.6h1.59v4.6h-1.59zM87.7 654.5h1.59v4.6h-1.59zM89.3 651.5h1.59v4.6h-1.59zM151.5 657.6h1.59v4.6h-1.59zM177.0 666.6h1.59v4.6h-1.59zM234.4 681.7h1.59v4.6h-1.59zM256.7 687.8h1.59v4.6h-1.59zM263.1 672.7h1.59v10.7h-1.59zM266.3 678.7h1.59v4.6h-1.59zM306.1 681.7h1.59v4.6h-1.59zM314.1 681.7h1.59v4.6h-1.59zM355.5 675.7h1.59v7.6h-1.59zM390.6 681.7h1.59v4.6h-1.59zM395.4 684.7h1.59v4.6h-1.59zM416.1 681.7h1.59v4.6h-1.59zM444.8 672.7h1.59v4.6h-1.59zM463.9 672.7h1.59v4.6h-1.59zM465.5 672.7h1.59v4.6h-1.59zM484.7 666.6h1.59v4.6h-1.59zM522.9 663.6h1.59v4.6h-1.59zM526.1 660.6h1.59v7.6h-1.59zM543.6 657.6h1.59v4.6h-1.59zM578.7 681.7h1.59v4.6h-1.59zM591.4 675.7h1.59v7.6h-1.59zM605.8 675.7h1.59v7.6h-1.59zM618.5 675.7h1.59v4.6h-1.59zM624.9 672.7h1.59v4.6h-1.59zM661.6 690.8h1.59v7.6h-1.59zM674.3 696.8h1.59v4.6h-1.59zM675.9 693.8h1.59v4.6h-1.59zM677.5 690.8h1.59v4.6h-1.59zM679.1 681.7h1.59v10.7h-1.59zM680.7 645.5h1.59v22.7h-1.59zM683.9 648.5h1.59v7.6h-1.59zM720.6 669.6h1.59v4.6h-1.59zM739.7 690.8h1.59v7.6h-1.59zM742.9 684.7h1.59v7.6h-1.59zM758.8 693.8h1.59v4.6h-1.59zM765.2 690.8h1.59v4.6h-1.59zM766.8 687.8h1.59v7.6h-1.59zM782.7 714.9h1.59v7.6h-1.59zM785.9 714.9h1.59v4.6h-1.59zM817.8 730.0h1.59v4.6h-1.59zM822.6 730.0h1.59v4.6h-1.59zM827.4 724.0h1.59v7.6h-1.59zM829.0 721.0h1.59v4.6h-1.59zM832.1 714.9h1.59v7.6h-1.59zM843.3 705.9h1.59v7.6h-1.59zM899.1 727.0h1.59v4.6h-1.59zM903.9 708.9h1.59v7.6h-1.59zM923.0 708.9h1.59v4.6h-1.59zM937.3 727.0h1.59v4.6h-1.59zM940.5 721.0h1.59v7.6h-1.59zM942.1 718.0h1.59v4.6h-1.59zM943.7 714.9h1.59v4.6h-1.59zM1012.3 696.8h1.59v4.6h-1.59zM1018.6 699.8h1.59v4.6h-1.59zM1021.8 696.8h1.59v4.6h-1.59zM1025.0 693.8h1.59v4.6h-1.59zM1029.8 687.8h1.59v7.6h-1.59zM1071.2 687.8h1.59v4.6h-1.59zM1114.3 678.7h1.59v4.6h-1.59zM1122.3 669.6h1.59v7.6h-1.59zM1157.3 690.8h1.59v7.6h-1.59zM1186.0 693.8h1.59v7.6h-1.59zM1187.6 690.8h1.59v4.6h-1.59zM1189.2 681.7h1.59v10.7h-1.59zM1213.1 708.9h1.59v7.6h-1.59zM1222.7 705.9h1.59v13.7h-1.59zM1238.6 745.1h1.59v28.8h-1.59zM1241.8 718.0h1.59v31.8h-1.59zM1245.0 696.8h1.59v31.8h-1.59zM1246.6 666.6h1.59v49.9h-1.59zM1248.2 663.6h1.59v31.8h-1.59zM1249.8 654.5h1.59v31.8h-1.59zM1251.4 630.4h1.59v46.9h-1.59zM1257.7 651.5h1.59v31.8h-1.59zM1259.3 642.5h1.59v43.9h-1.59zM1260.9 657.6h1.59v10.7h-1.59zM1268.9 663.6h1.59v10.7h-1.59zM1270.5 663.6h1.59v7.6h-1.59zM1275.3 657.6h1.59v16.7h-1.59zM1288.0 687.8h1.59v13.7h-1.59zM1289.6 684.7h1.59v10.7h-1.59zM1300.8 718.0h1.59v10.7h-1.59zM1302.4 696.8h1.59v31.8h-1.59zM1304.0 708.9h1.59v7.6h-1.59zM1310.3 699.8h1.59v19.7h-1.59zM1318.3 702.9h1.59v16.7h-1.59zM1319.9 699.8h1.59v10.7h-1.59zM1331.1 678.7h1.59v28.8h-1.59zM1332.7 675.7h1.59v10.7h-1.59zM1334.3 651.5h1.59v22.7h-1.59zM1337.4 657.6h1.59v13.7h-1.59zM1348.6 657.6h1.59v4.6h-1.59zM1351.8 651.5h1.59v7.6h-1.59zM1353.4 648.5h1.59v10.7h-1.59zM1355.0 630.4h1.59v19.7h-1.59zM1356.6 633.4h1.59v10.7h-1.59zM1359.8 624.3h1.59v10.7h-1.59zM1364.5 609.2h1.59v16.7h-1.59zM1366.1 609.2h1.59v4.6h-1.59zM1369.3 594.1h1.59v22.7h-1.59zM1377.3 600.2h1.59v10.7h-1.59zM1385.3 600.2h1.59v4.6h-1.59zM1388.4 594.1h1.59v4.6h-1.59zM1390.0 588.1h1.59v7.6h-1.59zM1391.6 576.0h1.59v22.7h-1.59zM1394.8 588.1h1.59v4.6h-1.59zM1404.4 588.1h1.59v7.6h-1.59zM1406.0 585.1h1.59v4.6h-1.59zM1409.2 563.9h1.59v22.7h-1.59zM1410.8 560.9h1.59v19.7h-1.59zM1414.0 557.9h1.59v10.7h-1.59zM1415.5 533.7h1.59v22.7h-1.59zM1417.1 527.7h1.59v19.7h-1.59zM1420.3 521.7h1.59v13.7h-1.59zM1429.9 524.7h1.59v4.6h-1.59zM1433.1 515.6h1.59v10.7h-1.59zM1434.7 518.6h1.59v4.6h-1.59zM1437.9 515.6h1.59v7.6h-1.59zM1442.6 509.6h1.59v7.6h-1.59zM1450.6 512.6h1.59v10.7h-1.59zM1455.4 506.6h1.59v10.7h-1.59zM1468.1 545.8h1.59v7.6h-1.59zM1469.7 539.8h1.59v7.6h-1.59zM1471.3 536.8h1.59v10.7h-1.59zM1472.9 536.8h1.59v7.6h-1.59zM1474.5 527.7h1.59v10.7h-1.59zM1476.1 518.6h1.59v10.7h-1.59zM1479.3 515.6h1.59v7.6h-1.59zM1480.9 509.6h1.59v7.6h-1.59zM1485.7 503.5h1.59v7.6h-1.59zM1493.7 482.4h1.59v22.7h-1.59zM1504.8 500.5h1.59v7.6h-1.59zM1509.6 497.5h1.59v7.6h-1.59zM1519.2 476.4h1.59v10.7h-1.59zM1522.3 467.3h1.59v10.7h-1.59zM1523.9 467.3h1.59v4.6h-1.59zM1528.7 461.3h1.59v10.7h-1.59zM1536.7 464.3h1.59v7.6h-1.59zM1539.9 473.3h1.59v10.7h-1.59zM1541.5 470.3h1.59v4.6h-1.59zM1544.7 467.3h1.59v4.6h-1.59zM1549.4 452.2h1.59v16.7h-1.59zM1551.0 446.2h1.59v13.7h-1.59zM1552.6 446.2h1.59v10.7h-1.59zM1555.8 440.1h1.59v7.6h-1.59zM1562.2 431.1h1.59v10.7h-1.59zM1570.2 437.1h1.59v7.6h-1.59zM1571.8 428.0h1.59v10.7h-1.59zM1578.1 443.1h1.59v13.7h-1.59zM1595.7 452.2h1.59v4.6h-1.59zM1630.7 485.4h1.59v4.6h-1.59zM1651.5 576.0h1.59v13.7h-1.59zM1654.6 560.9h1.59v16.7h-1.59zM1656.2 557.9h1.59v10.7h-1.59zM1657.8 548.8h1.59v10.7h-1.59zM1661.0 533.7h1.59v25.8h-1.59zM1662.6 545.8h1.59v4.6h-1.59zM1669.0 545.8h1.59v19.7h-1.59zM1670.6 542.8h1.59v16.7h-1.59zM1689.7 597.2h1.59v13.7h-1.59zM1692.9 570.0h1.59v22.7h-1.59zM1694.5 554.9h1.59v25.8h-1.59zM1699.3 560.9h1.59v7.6h-1.59zM1716.8 612.3h1.59v4.6h-1.59zM1718.4 609.2h1.59v4.6h-1.59zM1721.6 594.1h1.59v16.7h-1.59zM1724.8 594.1h1.59v4.6h-1.59zM1726.4 585.1h1.59v10.7h-1.59zM1737.5 606.2h1.59v7.6h-1.59zM1740.7 603.2h1.59v4.6h-1.59zM1750.3 603.2h1.59v4.6h-1.59zM1777.4 657.6h1.59v13.7h-1.59zM1780.6 663.6h1.59v4.6h-1.59zM1783.8 663.6h1.59v7.6h-1.59zM1818.8 678.7h1.59v13.7h-1.59zM1820.4 678.7h1.59v7.6h-1.59zM1841.1 702.9h1.59v4.6h-1.59zM1844.3 699.8h1.59v7.6h-1.59zM1850.7 681.7h1.59v13.7h-1.59zM1858.7 675.7h1.59v7.6h-1.59zM1866.6 675.7h1.59v7.6h-1.59zM1873.0 681.7h1.59v7.6h-1.59zM1876.2 678.7h1.59v7.6h-1.59zM1904.9 693.8h1.59v7.6h-1.59zM1908.1 684.7h1.59v19.7h-1.59z" fill="#ff0000"/>
<path d="M14.0 987.0V989.4H17.2H18.8H20.4V987.0H22.0V984.8H23.6V982.5H25.2V980.1H26.8V971.0H28.3H29.9V977.9H31.5H33.1V975.5H34.7V971.0H36.3H37.9H39.5V973.2H41.1V968.6H42.7V973.2H44.3V971.0H45.9V968.6H47.5H49.1V971.0H50.7H52.3V968.6H53.9H55.4V966.4H57.0V971.0H58.6H60.2V968.6H61.8H63.4V966.4H65.0V959.5H66.6H68.2V957.1H69.8H71.4H73.0V952.5H74.6H76.2V954.9H77.8H79.4H80.9V952.5H82.5V945.6H84.1V954.9H85.7V964.0H87.3V966.4H88.9V971.0H90.5V977.9H92.1V975.5H93.7H95.3H96.9H98.5V977.9H100.1H101.7V973.2H103.3V971.0H104.9H106.5H108.0V968.6H109.6H111.2V966.4H112.8V968.6H114.4H116.0V964.0H117.6V966.4H119.2V968.6H120.8V964.0H122.4V966.4H124.0H125.6H127.2V964.0H128.8H130.4V961.8H132.0H133.5V959.5H135.1V964.0H136.7H138.3V966.4H139.9H141.5H143.1V968.6H144.7V966.4H146.3H147.9V971.0H149.5V968.6H151.1V971.0H152.7V964.0H154.3V971.0H155.9V973.2H157.5H159.1V975.5H160.6V973.2H162.2V975.5H163.8V973.2H165.4V968.6H167.0H168.6H170.2V966.4H171.8V964.0H173.4V966.4H175.0V964.0H176.6H178.2H179.8H181.4V966.4H183.0H184.6H186.2H187.7H189.3V968.6H190.9V964.0H192.5V959.5H194.1V961.8H195.7V964.0H197.3H198.9V961.8H200.5V964.0H202.1V961.8H203.7V959.5H205.3V954.9H206.9H208.5V957.1H210.1V959.5H211.7H213.2H214.8V954.9H216.4V952.5H218.0V954.9H219.6H221.2H222.8V950.2H224.4H226.0H227.6H229.2H230.8H232.4H234.0H235.6H237.2H238.8H240.3H241.9H243.5H245.1V948.0H246.7V945.6H248.3V943.4H249.9V941.0H251.5V943.4H253.1H254.7V945.6H256.3H257.9H259.5V943.4H261.1H262.7V950.2H264.3V954.9H265.9H267.4V950.2H269.0V954.9H270.6V948.0H272.2V945.6H273.8V950.2H275.4V952.5H277.0H278.6H280.2V948.0H281.8H283.4H285.0H286.6H288.2H289.8H291.4V945.6H292.9H294.5V948.0H296.1H297.7H299.3V945.6H300.9V941.0H302.5H304.1V938.8H305.7H307.3H308.9V941.0H310.5V938.8H312.1H313.7H315.3H316.9H318.5H320.0H321.6H323.2V941.0H324.8V938.8H326.4H328.0V936.5H329.6H331.2H332.8H334.4V931.9H336.0V936.5H337.6V934.1H339.2H340.8H342.4H344.0H345.6H347.1H348.7V936.5H350.3H351.9V938.8H353.5H355.1V941.0H356.7V943.4H358.3V941.0H359.9H361.5H363.1H364.7H366.3H367.9V943.4H369.5H371.1V941.0H372.6H374.2V938.8H375.8H377.4V943.4H379.0H380.6V945.6H382.2H383.8V941.0H385.4H387.0H388.6V945.6H390.2V943.4H391.8H393.4H395.0H396.6V945.6H398.2V943.4H399.7V945.6H401.3H402.9H404.5H406.1V941.0H407.7V943.4H409.3H410.9H412.5V941.0H414.1V943.4H415.7H417.3V945.6H418.9V941.0H420.5V943.4H422.1H423.7V945.6H425.3H426.8H428.4H430.0H431.6V943.4H433.2H434.8H436.4H438.0H439.6H441.2V945.6H442.8V950.2H444.4H446.0H447.6H449.2H450.8V954.9H452.3H453.9V957.1H455.5V954.9H457.1H458.7V950.2H460.3V952.5H461.9V948.0H463.5H465.1V952.5H466.7V954.9H468.3V950.2H469.9H471.5H473.1V943.4H474.7V950.2H476.3H477.9V943.4H479.4H481.0H482.6V945.6H484.2H485.8V948.0H487.4V950.2H489.0V952.5H490.6H492.2H493.8V950.2H495.4V945.6H497.0H498.6V943.4H500.2V945.6H501.8V948.0H503.4V945.6H505.0H506.5H508.1V948.0H509.7V952.5H511.3H512.9V950.2H514.5V948.0H516.1V945.6H517.7V943.4H519.3H520.9V945.6H522.5V941.0H524.1V943.4H525.7V941.0H527.3H528.9H530.5H532.0V938.8H533.6V941.0H535.2V945.6H536.8V938.8H538.4V943.4H540.0H541.6H543.2H544.8V945.6H546.4V948.0H548.0V950.2H549.6V945.6H551.2V943.4H552.8V941.0H554.4V938.8H556.0V936.5H557.6V934.1H559.1V936.5H560.7V929.5H562.3V931.9H563.9V925.0H565.5H567.1H568.7H570.3H571.9H573.5V927.2H575.1H576.7H578.3V931.9H579.9V927.2H581.5H583.1H584.7H586.2V929.5H587.8V931.9H589.4H591.0V927.2H592.6H594.2V929.5H595.8V927.2H597.4H599.0H600.6H602.2H603.8V929.5H605.4H607.0V931.9H608.6V936.5H610.2V931.9H611.8H613.3H614.9V934.1H616.5H618.1V931.9H619.7H621.3V934.1H622.9V929.5H624.5V934.1H626.1H627.7V936.5H629.3V931.9H630.9V934.1H632.5H634.1V931.9H635.7V934.1H637.3V929.5H638.8V927.2H640.4V925.0H642.0V931.9H643.6V925.0H645.2V927.2H646.8V925.0H648.4H650.0V922.6H651.6V920.4H653.2V915.8H654.8V922.6H656.4H658.0V918.0H659.6H661.2V915.8H662.8H664.4V920.4H665.9H667.5V918.0H669.1V913.5H670.7H672.3H673.9V908.9H675.5V913.5H677.1V918.0H678.7V922.6H680.3H681.9V931.9H683.5V943.4H685.1V945.6H686.7V943.4H688.3V945.6H689.9V943.4H691.5V941.0H693.0H694.6V936.5H696.2V934.1H697.8H699.4V936.5H701.0V941.0H702.6V938.8H704.2H705.8H707.4V936.5H709.0H710.6H712.2V938.8H713.8H715.4V936.5H717.0V941.0H718.5H720.1H721.7V938.8H723.3V936.5H724.9V931.9H726.5H728.1V934.1H729.7H731.3V929.5H732.9V920.4H734.5V922.6H736.1V920.4H737.7V922.6H739.3V925.0H740.9V920.4H742.5V927.2H744.1V934.1H745.6V936.5H747.2V938.8H748.8V941.0H750.4V943.4H752.0V941.0H753.6V931.9H755.2V929.5H756.8V927.2H758.4V925.0H760.0V922.6H761.6V927.2H763.2V929.5H764.8H766.4V934.1H768.0H769.6V936.5H771.2H772.7V934.1H774.3V931.9H775.9V929.5H777.5V927.2H779.1V925.0H780.7H782.3V920.4H783.9H785.5H787.1H788.7V918.0H790.3V908.9H791.9V904.2H793.5H795.1V899.6H796.7H798.2V897.4H799.8V902.0H801.4V904.2H803.0V906.5H804.6H806.2H807.8V908.9H809.4V911.1H811.0V908.9H812.6V904.2H814.2V911.1H815.8V913.5H817.4H819.0V915.8H820.6V908.9H822.2H823.8V911.1H825.3V908.9H826.9H828.5H830.1H831.7V906.5H833.3V904.2H834.9H836.5H838.1V902.0H839.7V899.6H841.3V904.2H842.9V906.5H844.5H846.1V904.2H847.7H849.3V906.5H850.9V911.1H852.4H854.0V913.5H855.6V915.8H857.2V918.0H858.8H860.4V915.8H862.0V913.5H863.6H865.2H866.8V911.1H868.4V906.5H870.0V908.9H871.6V906.5H873.2V908.9H874.8V911.1H876.4V913.5H877.9V915.8H879.5V913.5H881.1H882.7H884.3V911.1H885.9V906.5H887.5H889.1H890.7V904.2H892.3V902.0H893.9V897.4H895.5H897.1V885.9H898.7V883.5H900.3V888.1H901.9V892.8H903.5V899.6H905.0V902.0H906.6H908.2H909.8V899.6H911.4H913.0V897.4H914.6V895.0H916.2H917.8V892.8H919.4V895.0H921.0H922.6V892.8H924.2V895.0H925.8H927.4V890.5H929.0V888.1H930.6V885.9H932.1H933.7V890.5H935.3V881.2H936.9V879.0H938.5V881.2H940.1H941.7V888.1H943.3V892.8H944.9V895.0H946.5H948.1V897.4H949.7V899.6H951.3V892.8H952.9V897.4H954.5V895.0H956.1H957.6H959.2V892.8H960.8H962.4H964.0V895.0H965.6V890.5H967.2H968.8V892.8H970.4H972.0V890.5H973.6V892.8H975.2V890.5H976.8V892.8H978.4V895.0H980.0H981.6H983.2V899.6H984.7V902.0H986.3V895.0H987.9V899.6H989.5H991.1V897.4H992.7H994.3H995.9V899.6H997.5V897.4H999.1H1000.7H1002.3H1003.9H1005.5V892.8H1007.1H1008.7H1010.3H1011.8H1013.4V888.1H1015.0H1016.6V890.5H1018.2V888.1H1019.8V890.5H1021.4H1023.0H1024.6V888.1H1026.2V890.5H1027.8V895.0H1029.4V899.6H1031.0V906.5H1032.6V904.2H1034.2V906.5H1035.8V908.9H1037.3V911.1H1038.9V904.2H1040.5V908.9H1042.1V906.5H1043.7V908.9H1045.3H1046.9V911.1H1048.5H1050.1H1051.7H1053.3H1054.9V908.9H1056.5H1058.1V904.2H1059.7H1061.3V906.5H1062.9H1064.4V908.9H1066.0H1067.6H1069.2V911.1H1070.8V908.9H1072.4V904.2H1074.0V906.5H1075.6V908.9H1077.2V904.2H1078.8V906.5H1080.4H1082.0H1083.6V911.1H1085.2H1086.8V908.9H1088.4H1090.0H1091.5V906.5H1093.1V908.9H1094.7V911.1H1096.3V908.9H1097.9H1099.5V906.5H1101.1V911.1H1102.7V913.5H1104.3V920.4H1105.9H1107.5V922.6H1109.1V925.0H1110.7V915.8H1112.3V913.5H1113.9H1115.5V911.1H1117.0V915.8H1118.6V918.0H1120.2V920.4H1121.8H1123.4V922.6H1125.0V920.4H1126.6V925.0H1128.2V922.6H1129.8V925.0H1131.4V927.2H1133.0H1134.6V925.0H1136.2V927.2H1137.8V925.0H1139.4V920.4H1141.0V922.6H1142.6H1144.1V920.4H1145.7V918.0H1147.3V920.4H1148.9V918.0H1150.5V915.8H1152.1V913.5H1153.7H1155.3H1156.9H1158.5V911.1H1160.1V913.5H1161.7H1163.3H1164.9V911.1H1166.5H1168.1H1169.7V908.9H1171.2V911.1H1172.8H1174.4V915.8H1176.0V918.0H1177.6V920.4H1179.2H1180.8V913.5H1182.4H1184.0V915.8H1185.6V911.1H1187.2V915.8H1188.8V918.0H1190.4V925.0H1192.0V920.4H1193.6H1195.2H1196.7H1198.3V922.6H1199.9V925.0H1201.5V918.0H1203.1V913.5H1204.7V908.9H1206.3V902.0H1207.9V899.6H1209.5V902.0H1211.1V904.2H1212.7H1214.3H1215.9H1217.5V902.0H1219.1H1220.7V897.4H1222.3V902.0H1223.8V906.5H1225.4V911.1H1227.0V913.5H1228.6V911.1H1230.2H1231.8V906.5H1233.4V902.0H1235.0V897.4H1236.6H1238.2H1239.8V902.0H1241.4V897.4H1243.0V899.6H1244.6V906.5H1246.2V911.1H1247.8V920.4H1249.4V925.0H1250.9V918.0H1252.5V906.5H1254.1V895.0H1255.7V899.6H1257.3V904.2H1258.9H1260.5V908.9H1262.1V911.1H1263.7V920.4H1265.3V915.8H1266.9V911.1H1268.5H1270.1V904.2H1271.7V902.0H1273.3V897.4H1274.9V895.0H1276.4H1278.0H1279.6V899.6H1281.2V902.0H1282.8V904.2H1284.4V902.0H1286.0V890.5H1287.6V888.1H1289.2V890.5H1290.8V885.9H1292.4V883.5H1294.0V881.2H1295.6V869.8H1297.2V867.5H1298.8V865.1H1300.4V860.5H1302.0V851.4H1303.5V846.8H1305.1V844.5H1306.7H1308.3V853.6H1309.9V860.5H1311.5H1313.1V867.5H1314.7V872.0H1316.3V867.5H1317.9V865.1H1319.5V867.5H1321.1V872.0H1322.7V874.4H1324.3H1325.9V876.6H1327.5H1329.1V881.2H1330.6V888.1H1332.2V895.0H1333.8V902.0H1335.4V908.9H1337.0V904.2H1338.6V902.0H1340.2V899.6H1341.8H1343.4H1345.0H1346.6H1348.2V897.4H1349.8V892.8H1351.4V895.0H1353.0V897.4H1354.6V899.6H1356.1H1357.7V904.2H1359.3V902.0H1360.9H1362.5V904.2H1364.1V908.9H1365.7V918.0H1367.3H1368.9V925.0H1370.5V929.5H1372.1V927.2H1373.7V929.5H1375.3V934.1H1376.9H1378.5V936.5H1380.1V934.1H1381.7V936.5H1383.2V938.8H1384.8V936.5H1386.4H1388.0V934.1H1389.6V938.8H1391.2V943.4H1392.8H1394.4V941.0H1396.0V938.8H1397.6V936.5H1399.2H1400.8V938.8H1402.4V941.0H1404.0V945.6H1405.6V957.1H1407.2V959.5H1408.8H1410.3H1411.9V961.8H1413.5V964.0H1415.1V966.4H1416.7V971.0H1418.3V975.5H1419.9V991.6H1421.5H1423.1V989.4H1424.7H1426.3V991.6H1427.9V987.0H1429.5V994.0H1431.1V991.6H1432.7V1003.1H1434.3V998.5H1435.8V994.0H1437.4V987.0H1439.0V984.8H1440.6V982.5H1442.2H1443.8V980.1H1445.4V977.9H1447.0V973.2H1448.6V971.0H1450.2V975.5H1451.8V977.9H1453.4H1455.0V975.5H1456.6V973.2H1458.2H1459.8V968.6H1461.4V966.4H1462.9H1464.5H1466.1V968.6H1467.7V966.4H1469.3V968.6H1470.9H1472.5V971.0H1474.1V975.5H1475.7V987.0H1477.3V989.4H1478.9V996.2H1480.5V998.5H1482.1H1483.7V994.0H1485.3H1486.9H1488.5V991.6H1490.0H1491.6H1493.2H1494.8V998.5H1496.4V1000.9H1498.0H1499.6V998.5H1501.2H1502.8V996.2H1504.4V991.6H1506.0V994.0H1507.6V998.5H1509.2H1510.8H1512.4H1514.0V1000.9H1515.5V998.5H1517.1V1000.9H1518.7V1007.8H1520.3H1521.9V1010.0H1523.5V1012.4H1525.1V1014.6H1526.7V1017.0H1528.3V1019.2H1529.9H1531.5V1021.5H1533.1H1534.7V1023.9H1536.3V1033.0H1537.9V1028.5H1539.5V1026.2H1541.1V1019.2H1542.6V1014.6H1544.2V1017.0H1545.8H1547.4V1019.2H1549.0H1550.6V1014.6H1552.2V1021.5H1553.8V1023.9H1555.4V1028.5H1557.0V1030.8H1558.6V1033.0H1560.2V1030.8H1561.8V1028.5H1563.4V1026.2H1565.0V1030.8H1566.6V1026.2H1568.2H1569.7V1030.8H1571.3H1572.9V1033.0H1574.5V1035.3H1576.1V1037.7H1577.7V1030.8H1579.3V1023.9H1580.9V1021.5H1582.5H1584.1H1585.7H1587.3H1588.9H1590.5H1592.1H1593.7H1595.2V1023.9H1596.8H1598.4H1600.0H1601.6V1021.5H1603.2V1019.2H1604.8V1017.0H1606.4V1021.5H1608.0H1609.6V1019.2H1611.2V1017.0H1612.8V1014.6H1614.4V1010.0H1616.0V1005.5H1617.6V1000.9H1619.2V996.2H1620.8H1622.3V998.5H1623.9V1000.9H1625.5V1003.1H1627.1H1628.7V1000.9H1630.3H1631.9V998.5H1633.5H1635.1H1636.7H1638.3V984.8H1639.9V973.2H1641.5V966.4H1643.1H1644.7V961.8H1646.3V950.2H1647.9V948.0H1649.4V954.9H1651.0V957.1H1652.6H1654.2H1655.8V954.9H1657.4V964.0H1659.0V971.0H1660.6V973.2H1662.2V975.5H1663.8V980.1H1665.4V975.5H1667.0V968.6H1668.6V964.0H1670.2V966.4H1671.8H1673.4V961.8H1674.9V966.4H1676.5H1678.1V964.0H1679.7V961.8H1681.3H1682.9V952.5H1684.5V950.2H1686.1V945.6H1687.7V936.5H1689.3V927.2H1690.9V934.1H1692.5V945.6H1694.1V954.9H1695.7V959.5H1697.3H1698.9V968.6H1700.5V966.4H1702.0V964.0H1703.6V961.8H1705.2V957.1H1706.8V952.5H1708.4V950.2H1710.0V948.0H1711.6V950.2H1713.2V952.5H1714.8V948.0H1716.4V943.4H1718.0V938.8H1719.6V941.0H1721.2H1722.8V938.8H1724.4V945.6H1726.0V948.0H1727.6V952.5H1729.1V957.1H1730.7H1732.3V954.9H1733.9V950.2H1735.5V948.0H1737.1V945.6H1738.7V943.4H1740.3V945.6H1741.9H1743.5H1745.1H1746.7V948.0H1748.3V950.2H1749.9V952.5H1751.5V950.2H1753.1H1754.6H1756.2V948.0H1757.8V943.4H1759.4V936.5H1761.0H1762.6V934.1H1764.2H1765.8H1767.4H1769.0V938.8H1770.6H1772.2V934.1H1773.8V931.9H1775.4V925.0H1777.0V922.6H1778.6H1780.2V925.0H1781.7V927.2H1783.3V925.0H1784.9V927.2H1786.5V922.6H1788.1V927.2H1789.7H1791.3H1792.9H1794.5V925.0H1796.1V927.2H1797.7H1799.3V931.9H1800.9V934.1H1802.5V931.9H1804.1V929.5H1805.7V922.6H1807.3V925.0H1808.8H1810.4H1812.0V920.4H1813.6V911.1H1815.2V908.9H1816.8V911.1H1818.4V913.5H1820.0V918.0H1821.6V920.4H1823.2V922.6H1824.8V918.0H1826.4V915.8H1828.0V906.5H1829.6V911.1H1831.2V915.8H1832.8V913.5H1834.3V915.8H1835.9V918.0H1837.5V915.8H1839.1V920.4H1840.7V918.0H1842.3H1843.9H1845.5H1847.1V915.8H1848.7V922.6H1850.3V931.9H1851.9V936.5H1853.5H1855.1V934.1H1856.7H1858.3V936.5H1859.9V931.9H1861.4H1863.0V927.2H1864.6V920.4H1866.2V925.0H1867.8V929.5H1869.4H1871.0V925.0H1872.6V920.4H1874.2H1875.8V922.6H1877.4V920.4H1879.0V927.2H1880.6V929.5H1882.2V931.9H1883.8V936.5H1885.4H1887.0V931.9H1888.5V934.1H1890.1V938.8H1891.7V931.9H1893.3V929.5H1894.9V927.2H1896.5V929.5H1898.1H1899.7H1901.3H1902.9H1904.5V931.9H1906.1V929.5H1907.7V938.8H1909.3V943.4H1910.9V950.2H1912.5V931.9H1914.0V927.2H1915.6H1917.2V925.0H1918.8H1920.4V922.6H1922.0V920.4H1923.6V918.0H1925.2V920.4H1926.8V927.2H1928.4" stroke="#ff0000" stroke-width="3.2" fill="none" stroke-linejoin="miter"/>
</svg>
<div class="abs gl">
<div class="mono yl" style="top:92.2px">6,840</div>
<div class="mono yl" style="top:138.0px">6,830</div>
<div class="mono yl" style="top:184.0px">6,820</div>
<div class="mono yl" style="top:230.0px">6,810</div>
<div class="mono yl" style="top:276.0px">6,800</div>
<div class="mono yl" style="top:368.5px">6,780</div>
<div class="mono box" style="top:328.5px;height:34.0px;line-height:27.0px">6,790</div>
<div class="mono xl" style="left:57.0px;top:369.5px;font-weight:bold">06</div>
<div class="mono xl" style="left:105.2px;top:369.5px">09</div>
<div class="mono xl" style="left:200.8px;top:369.5px">10</div>
<div class="mono xl" style="left:294.5px;top:369.5px">11</div>
<div class="mono xl" style="left:383.2px;top:369.5px">12</div>
<div class="mono xl" style="left:477.2px;top:369.5px">13</div>
<div class="mono xl" style="left:572.5px;top:369.5px">14</div>
<div class="mono xl" style="left:640.5px;top:369.5px">15</div>
<div class="mono xl" style="left:681.8px;top:369.5px">16</div>
<div class="mono xl" style="left:726.0px;top:369.5px">17</div>
<div class="mono xl" style="left:822.2px;top:369.5px">18</div>
<div class="mono xl" style="left:916.0px;top:369.5px">19</div>
<div class="mono xl" style="left:1005.5px;top:369.5px">20</div>
<div class="mono xl" style="left:1096.2px;top:369.5px">21</div>
<div class="mono xl" style="left:1186.5px;top:369.5px">22</div>
<div class="mono xl" style="left:1283.8px;top:369.5px">23</div>
<div class="mono xl" style="left:1378.8px;top:369.5px">00</div>
<div class="mono xl" style="left:1474.5px;top:369.5px">01</div>
<div class="mono xl" style="left:1571.0px;top:369.5px">02</div>
<div class="mono xl" style="left:1661.0px;top:369.5px">03</div>
<div class="mono xl" style="left:1749.0px;top:369.5px">04</div>
<div class="mono xl" style="left:1839.5px;top:369.5px">05</div>
<div class="mono xl" style="left:1902.0px;top:369.5px">06</div>
<div class="mono abs" style="left:1379.5px;top:347.0px;color:#e6e6e6">11</div>
<div class="mono yl" style="top:405.8px;height:11.7px;overflow:hidden"><div style="margin-top:-8.3px">3,875</div></div>
<div class="mono yl" style="top:470.0px">3,850</div>
<div class="mono yl" style="top:545.5px">3,825</div>
<div class="mono yl" style="top:620.0px">3,800</div>
<div class="mono yl" style="top:771.5px">3,750</div>
<div class="mono box" style="top:702.0px;height:34.0px;line-height:27.0px">3,775</div>
<div class="mono xl" style="left:57.0px;top:797.0px;font-weight:bold">06</div>
<div class="mono xl" style="left:105.2px;top:797.0px">09</div>
<div class="mono xl" style="left:200.8px;top:797.0px">10</div>
<div class="mono xl" style="left:294.5px;top:797.0px">11</div>
<div class="mono xl" style="left:383.2px;top:797.0px">12</div>
<div class="mono xl" style="left:477.2px;top:797.0px">13</div>
<div class="mono xl" style="left:572.5px;top:797.0px">14</div>
<div class="mono xl" style="left:640.5px;top:797.0px">15</div>
<div class="mono xl" style="left:681.8px;top:797.0px">16</div>
<div class="mono xl" style="left:726.0px;top:797.0px">17</div>
<div class="mono xl" style="left:822.2px;top:797.0px">18</div>
<div class="mono xl" style="left:916.0px;top:797.0px">19</div>
<div class="mono xl" style="left:1005.5px;top:797.0px">20</div>
<div class="mono xl" style="left:1096.2px;top:797.0px">21</div>
<div class="mono xl" style="left:1186.5px;top:797.0px">22</div>
<div class="mono xl" style="left:1283.8px;top:797.0px">23</div>
<div class="mono xl" style="left:1378.8px;top:797.0px">00</div>
<div class="mono xl" style="left:1474.5px;top:797.0px">01</div>
<div class="mono xl" style="left:1571.0px;top:797.0px">02</div>
<div class="mono xl" style="left:1661.0px;top:797.0px">03</div>
<div class="mono xl" style="left:1749.0px;top:797.0px">04</div>
<div class="mono xl" style="left:1839.5px;top:797.0px">05</div>
<div class="mono xl" style="left:1902.0px;top:797.0px">06</div>
<div class="mono abs" style="left:1379.5px;top:773.0px;color:#e6e6e6">11</div>
<div class="mono yl" style="top:836.5px">3,050</div>
<div class="mono yl" style="top:894.0px">3,025</div>
<div class="mono yl" style="top:951.5px">3,000</div>
<div class="mono yl" style="top:1009.0px">2,975</div>
<div class="mono yl" style="top:1066.5px;height:7.5px;overflow:hidden">2,950</div>
<div class="mono box" style="top:922.5px;height:33.5px;line-height:26.5px">3,015</div>
<div class="mono xl" style="left:57.0px;top:1048.0px;font-weight:bold">06</div>
<div class="mono xl" style="left:105.2px;top:1048.0px">09</div>
<div class="mono xl" style="left:200.8px;top:1048.0px">10</div>
<div class="mono xl" style="left:294.5px;top:1048.0px">11</div>
<div class="mono xl" style="left:383.2px;top:1048.0px">12</div>
<div class="mono xl" style="left:477.2px;top:1048.0px">13</div>
<div class="mono xl" style="left:572.5px;top:1048.0px">14</div>
<div class="mono xl" style="left:640.5px;top:1048.0px">15</div>
<div class="mono xl" style="left:681.8px;top:1048.0px">16</div>
<div class="mono xl" style="left:726.0px;top:1048.0px">17</div>
<div class="mono xl" style="left:822.2px;top:1048.0px">18</div>
<div class="mono xl" style="left:916.0px;top:1048.0px">19</div>
<div class="mono xl" style="left:1005.5px;top:1048.0px">20</div>
<div class="mono xl" style="left:1096.2px;top:1048.0px">21</div>
<div class="mono xl" style="left:1186.5px;top:1048.0px">22</div>
<div class="mono xl" style="left:1283.8px;top:1048.0px">23</div>
<div class="mono xl" style="left:1378.8px;top:1048.0px">00</div>
<div class="mono xl" style="left:1474.5px;top:1048.0px">01</div>
<div class="mono xl" style="left:1571.0px;top:1048.0px">02</div>
<div class="mono xl" style="left:1661.0px;top:1048.0px">03</div>
<div class="mono xl" style="left:1749.0px;top:1048.0px">04</div>
<div class="mono xl" style="left:1839.5px;top:1048.0px">05</div>
<div class="mono xl" style="left:1902.0px;top:1048.0px">06</div>
<div class="mono abs" style="left:1379.5px;top:1025.0px;color:#e6e6e6">11</div>
</div>
<!-- title bar -->
<svg width="24" height="24" viewBox="0 0 24 24" style="left:15px;top:11px">
<rect x="1.5" y="1" width="20" height="20" fill="#f4f4f4"/>
<path d="M2 5h19M2 9h19M2 13h19M2 17h19" stroke="#d8d8d8" stroke-width="1"/>
<path d="M1.8 0.5V21.2H22.5" stroke="#8a8a8a" stroke-width="1.6" fill="none"/>
<path d="M6 9v10" stroke="#ff1010" stroke-width="2.6"/><path d="M9 3v15" stroke="#1a8cff" stroke-width="2.2"/>
<path d="M12 2v13" stroke="#ff1010" stroke-width="2.8"/><path d="M15 4v12" stroke="#1a8cff" stroke-width="2.2"/>
<path d="M18 3v13" stroke="#ff1010" stroke-width="2.6"/><path d="M20 6v7" stroke="#ff1010" stroke-width="1.6"/>
</svg>
<div class="abs ui tt" style="left:45.5px">金</div><div class="abs ui tt" style="left:65.8px">1</div><div class="abs ui tt" style="left:73.4px">分足</div><div class="abs ui tt" style="left:111.4px;letter-spacing:-0.4px">[2022/12]</div><div class="abs ui tt" style="left:190.3px;letter-spacing:-1.9px">1.00</div><div class="abs ui tt" style="left:227px;transform:scaleX(1.3);transform-origin:0 0">-</div><div class="abs ui tt" style="left:242.3px">白金</div><div class="abs ui tt" style="left:281.3px">1</div><div class="abs ui tt" style="left:288.9px">分足</div><div class="abs ui tt" style="left:326.9px;letter-spacing:-0.4px">[2022/12]</div><div class="abs ui tt" style="left:405.8px;letter-spacing:-1.9px">1.00</div>
<!-- window buttons -->
<svg width="140" height="40" viewBox="0 0 140 40" style="left:1896px;top:0">
<defs><linearGradient id="bg1" x1="0" y1="0" x2="0" y2="1"><stop offset="0" stop-color="#fdfdfd"/><stop offset="0.5" stop-color="#e6e6e6"/><stop offset="1" stop-color="#c2c2c2"/></linearGradient></defs>
<rect x="6.5" y="13" width="15" height="20" fill="#f8f8f8" stroke="#7a7a7a" stroke-width="1.6"/>
<path d="M6 13.2h16" stroke="#6a6a6a" stroke-width="2.4"/>
<rect x="12.5" y="18.5" width="14" height="10.5" fill="#fafafa" stroke="#6e6e6e" stroke-width="2"/>
<path d="M13 22.5h13M13 25.5h13M17 20v9M21.5 20v9" stroke="#cfcfcf" stroke-width="1"/>
<rect x="41" y="9.8" width="26" height="26" rx="4.5" fill="url(#bg1)" stroke="#9a9a9a" stroke-width="1.6"/>
<rect x="72" y="9.8" width="26.5" height="26" rx="4.5" fill="url(#bg1)" stroke="#9a9a9a" stroke-width="1.6"/>
<rect x="103.5" y="9.8" width="26.5" height="26" rx="4.5" fill="url(#bg1)" stroke="#9a9a9a" stroke-width="1.6"/>
<path d="M48.5 27.5h8.5" stroke="#5e5e5e" stroke-width="2.8"/>
<rect x="80" y="18" width="10.5" height="10.5" fill="none" stroke="#5e5e5e" stroke-width="1.8"/><path d="M79.2 18.5h12.2" stroke="#5e5e5e" stroke-width="3"/>
<path d="M111 17.2l11.5 11.3M122.5 17.2l-11.5 11.3" stroke="#5e5e5e" stroke-width="2.6" stroke-linecap="round"/>
</svg>
<!-- toolbar contents -->
<div class="abs ui" style="left:16px;top:47.300px">金</div>
<div class="abs ui" style="left:52.5px;top:46.500px;letter-spacing:-0.1px">2022/12</div>
<div class="abs spin" style="left:127px;top:44px;width:77px"></div>
<div class="abs ui" style="left:129.3px;top:44px;color:#000;letter-spacing:-2.1px">1.00</div>
<div class="abs ui" style="left:220px;top:47.300px;letter-spacing:0.6px">白金</div>
<div class="abs ui" style="left:275.8px;top:46.500px;letter-spacing:-0.1px">2022/12</div>
<div class="abs spin" style="left:350px;top:44px;width:76.5px"></div>
<div class="abs ui" style="left:352.5px;top:44px;color:#000;letter-spacing:-2.1px">1.00</div>
<div class="abs ui" style="left:444.7px;top:47.3px">分足</div>
<div class="abs spin" style="left:507px;top:44px;width:71.5px"></div>
<div class="abs ui" style="left:509.5px;top:43.5px;color:#000;letter-spacing:0.2px">1200</div>
<div class="abs ui" style="left:586.6px;top:47.3px"><span style="letter-spacing:-0.6px">1</span>分足</div>
<svg width="2036" height="80" viewBox="0 0 2036 80">
<defs><linearGradient id="sb" x1="0" y1="0" x2="0" y2="1"><stop offset="0" stop-color="#f6f6f6"/><stop offset="1" stop-color="#dcdcdc"/></linearGradient></defs>
<!-- spin buttons -->
<g id="spb1"><rect x="179.7" y="46.2" width="22" height="11.5" fill="url(#sb)" stroke="#b4b4b4" stroke-width="1"/><rect x="179.7" y="58.5" width="22" height="10.8" fill="url(#sb)" stroke="#b4b4b4" stroke-width="1"/><path d="M185.2 54.3h9.6l-4.8-4.6zM185.2 60.6h9.6l-4.8 4.6z" fill="#000"/></g>
<g><rect x="403" y="46.2" width="22" height="11.5" fill="url(#sb)" stroke="#b4b4b4" stroke-width="1"/><rect x="403" y="58.5" width="22" height="10.8" fill="url(#sb)" stroke="#b4b4b4" stroke-width="1"/><path d="M408.5 54.3h9.6l-4.8-4.6zM408.5 60.6h9.6l-4.8 4.6z" fill="#000"/></g>
<g><rect x="555" y="46.2" width="21" height="10.5" fill="url(#sb)" stroke="#b4b4b4" stroke-width="1"/><rect x="555" y="57.5" width="21" height="10.5" fill="url(#sb)" stroke="#b4b4b4" stroke-width="1"/><path d="M560.7 53.8h9.6l-4.8-4.6zM560.7 59.8h9.6l-4.8 4.6z" fill="#000"/></g>
<!-- dropdown arrows -->
<path d="M492.3 56h8.6l-4.3 5.2zM643.3 56h8.8l-4.4 5.2zM896.7 55.7h8.6l-4.3 5.2z" fill="#000"/>
<!-- separators -->
<path d="M211.2 51V69M434.8 51V69M664.6 51V69M709.7 51V69M863 51V69M953.8 51V69" stroke="#f2f2f2" stroke-width="1.6"/>
<path d="M210 51V69M433.6 51V69M663.4 51V69M708.5 51V69M861.8 51V69M952.6 51V69" stroke="#b4b8c0" stroke-width="1"/>
<!-- icon1: crosshair (pressed) -->
<rect x="669.5" y="44" width="26" height="26" fill="#f3f3ee"/>
<path d="M671 48.5h24M671 51.5h24M671 55.5h24M671 58.5h24M671 61.5h24M671 64.5h24M671 67.5h24" stroke="#dcdcd8" stroke-width="1"/>
<path d="M669.5 70.5V44H696" stroke="#6c6c6c" stroke-width="1.8" fill="none"/><path d="M669.5 70.3H695.8V44" stroke="#fff" stroke-width="1.6" fill="none"/>
<path d="M677.3 46v23.5M673 52.8h21.5" stroke="#4a44c4" stroke-width="1.7"/>
<path d="M690.8 66.300l-7.500-7.500" stroke="#9322b4" stroke-width="2.400"/><path d="M680.600 56.400v7l2.300-2.400 2.300-2.300 2.500-2.300z" fill="#9322b4"/>
<!-- icon2: pointer (pressed) -->
<rect x="714.5" y="44" width="26" height="26" fill="#aeb3b6"/>
<path d="M714.5 70.5V44H741" stroke="#6c6c6c" stroke-width="1.8" fill="none"/><path d="M714.5 70.3H740.8V44" stroke="#fff" stroke-width="1.6" fill="none"/>
<path d="M719.2 49.5L724 62.6l3-3.100 6.300 7.300 3-2.800-6.500-7.100 3.200-2.400z" fill="#f4f0ff" stroke="#6b50cc" stroke-width="2" stroke-linejoin="round"/>
<!-- icon3: hand -->
<path d="M757.5 68c-1.2-3-3.6-5.4-5.6-8.2-1.3-1.9 0.6-3.5 2.4-2.1l2.6 2.3-1.6-9c-0.4-2.3 2.3-2.9 3-0.7l0.9 3.6 0.1-5.6c0-2.3 3-2.4 3.2-0.1l0.4 5.4 1.3-4.3c0.7-2.1 3.4-1.4 3 0.8l-0.8 5.3 1.7-2.6c1.2-1.7 3.3-0.6 2.7 1.3-1 3.5-1.3 6-1.6 8.600-0.300 2.300-0.800 3.700-1.700 5.300z" fill="#fff6e6" stroke="#df8f1c" stroke-width="1.8" stroke-linejoin="round"/>
<!-- icon4: orange marker -->
<path d="M790.2 63.300l13.600-14.800c2.200-2.400 6.400 1.400 4.200 3.800l-13.600 14.800-4.400 1.200-2.600 1.400 1.600-2.600z" fill="#f6b24a" stroke="#e8961e" stroke-width="1.6" stroke-linejoin="round"/>
<path d="M793.2 63.300l11.800-12.800" stroke="#fff3d8" stroke-width="2.200" stroke-linecap="round"/>
<path d="M788 69.300l2.200-1.200 1.600-2.600" stroke="#b06a10" stroke-width="1.600" fill="none"/>
<!-- icon5: blue pen -->
<path d="M826.8 63.300l13.600-14.800c2.200-2.400 6.400 1.400 4.200 3.800l-13.600 14.800-4.400 1.200-2.600 1.400 1.600-2.600z" fill="#3f86f0" stroke="#2a62d8" stroke-width="1.6" stroke-linejoin="round"/>
<path d="M829.8 63.300l11.800-12.800" stroke="#e6f0ff" stroke-width="2.200" stroke-linecap="round"/>
<path d="M840.4 57.800l5.600 5.600-5.600 5.600-5.600-5.600z" fill="#0c2a80"/>
<path d="M838.5 61.500v3.800M842.300 61.500v3.800M838 63.400h5" stroke="#c8d4f0" stroke-width="0.8"/>
<!-- icon6: bar chart -->
<rect x="870.5" y="48" width="21.500" height="20" fill="#f6f6f4"/>
<path d="M871 51.500h21M871 55h21M871 58.500h21M871 62h21M871 65.500h21" stroke="#dcdcdc" stroke-width="1"/>
<path d="M870.800 47.500V68.200H892.200" stroke="#868686" stroke-width="1.600" fill="none"/>
<path d="M874.300 67.500v-9.400M879.700 67.500v-18.300M884.600 67.500v-15.300M889.400 67.500v-8.400" stroke="#1284ff" stroke-width="2.700"/>
<!-- icon7: chart with X -->
<rect x="914.500" y="48" width="21.500" height="20" fill="#f6f6f4"/>
<path d="M915 51.500h21M915 55h21M915 58.500h21M915 62h21M915 65.500h21" stroke="#dcdcdc" stroke-width="1"/>
<path d="M914.800 47.500V68.200H936.200" stroke="#868686" stroke-width="1.600" fill="none"/>
<path d="M918.600 67.500v-9.400M923.800 67.500v-18.300M928.600 67.500v-15.300M933.400 67.500v-8.400" stroke="#1284ff" stroke-width="2.700"/>
<path d="M917.800 50.800l14.700 13.400M932.500 50.800l-14.700 13.400" stroke="#ff2222" stroke-width="2.200" stroke-linecap="round"/>
<!-- icon8: refresh R -->
<path d="M972.500 50.500a8.300 8.300 0 1 0 5.300 14.700" stroke="#1c94ea" stroke-width="3.200" fill="none"/>
<path d="M960.700 46.300h9.300v8.800z" fill="#1466ff"/>
<!-- wrench -->
<path d="M1992.400 66.400l8.800-8" stroke="#3a3aff" stroke-width="5.400" stroke-linecap="round"/>
<path d="M2007.800 47.600c-4-1.300-8 1.600-7.600 5.800 0.200 2.800 2.600 5 5.600 4.900 3.400-0.100 5.900-2.700 5.900-5.900l-4.200 2.900-3-1.500 0.300-3.200z" fill="#e8e8ff" stroke="#6a6aff" stroke-width="2.200" stroke-linejoin="round"/>
</svg>
<div class="abs" style="left:971.300px;top:46.500px;font:bold 15.500px/20px 'Liberation Sans',sans-serif;color:#2272e2">R</div>

</body></html>
